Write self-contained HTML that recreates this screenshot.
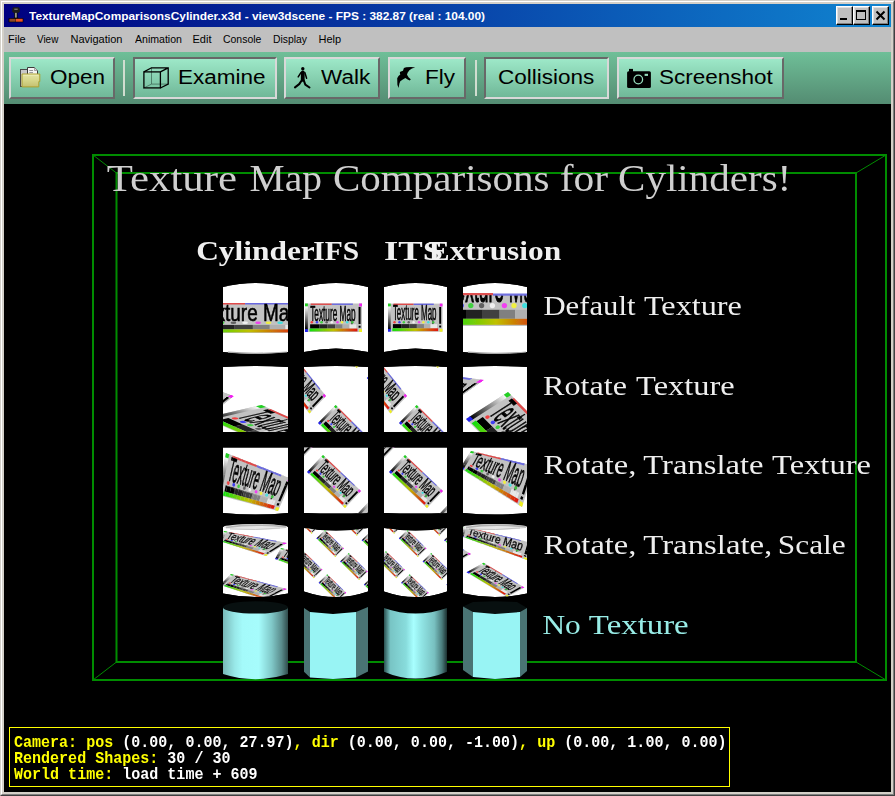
<!DOCTYPE html>
<html><head><meta charset="utf-8">
<style>
*{margin:0;padding:0;box-sizing:border-box}
html,body{width:895px;height:796px;overflow:hidden;background:#d4d0c8;font-family:"Liberation Sans",sans-serif}
#scene{will-change:transform}
.abs{position:absolute}
#frame{position:absolute;left:0;top:0;width:895px;height:796px;background:#d4d0c8;
 border-top:1px solid #d4d0c8;border-left:1px solid #d4d0c8;border-right:1px solid #404040;border-bottom:1px solid #404040}
#frame2{position:absolute;left:1px;top:1px;width:893px;height:794px;border-top:1px solid #fff;border-left:1px solid #fff;border-right:1px solid #808080;border-bottom:1px solid #808080}
#title{position:absolute;left:4px;top:4px;width:887px;height:23px;background:linear-gradient(to right,#000080 0%,#1084d0 100%)}
#ttext{position:absolute;left:29px;top:9px;color:#fff;font-weight:bold;font-size:11px;line-height:14px;white-space:nowrap;transform-origin:0 0;transform:scaleX(1.08)}
.tb{position:absolute;top:6px;width:17px;height:19px;background:#c0c0c0;border-top:1px solid #fff;border-left:1px solid #fff;border-right:1px solid #000;border-bottom:1px solid #000;box-shadow:inset -1px -1px #808080,inset 1px 1px #dfdfdf}
#menu{position:absolute;left:4px;top:27px;width:887px;height:25px;background:#c0c0c0}
.mi{position:absolute;top:32px;font-size:11px;line-height:14px;color:#000;white-space:nowrap}
#toolbar{position:absolute;left:4px;top:52px;width:887px;height:52px;background:linear-gradient(to bottom,#6fbf98,#548c72)}
.btn{position:absolute;top:57px;height:42px;background:linear-gradient(to bottom,#9de8c8,#70b898);
 border-top:2px solid #d8d8d8;border-left:2px solid #d8d8d8;border-right:2px solid #686868;border-bottom:2px solid #686868}
.btn.on{border-top-color:#686868;border-left-color:#686868;border-right-color:#d8d8d8;border-bottom-color:#d8d8d8}
.bt{position:absolute;top:65px;font-size:20px;line-height:24px;color:#000;white-space:nowrap;transform-origin:0 0;transform:scaleX(1.125)}
.sep{position:absolute;top:60px;width:2px;height:36px;background:#d0ddd0}
#view{position:absolute;left:4px;top:104px;width:887px;height:688px;background:#000;overflow:hidden}
</style></head>
<body>
<div id="frame"></div><div id="frame2"></div>
<div id="title"></div>
<div id="ttext">TextureMapComparisonsCylinder.x3d - view3dscene - FPS : 382.87 (real : 104.00)</div>
<div class="tb" style="left:836px"></div>
<div class="tb" style="left:853px"></div>
<div class="tb" style="left:872px"></div>
<div id="menu"></div>
<div class="mi" style="left:8px">File</div>
<div class="mi" style="left:37px;transform:scaleX(0.9);transform-origin:0 0">View</div>
<div class="mi" style="left:70.5px">Navigation</div>
<div class="mi" style="left:134.5px;transform:scaleX(0.96);transform-origin:0 0">Animation</div>
<div class="mi" style="left:192.5px">Edit</div>
<div class="mi" style="left:223px;transform:scaleX(0.95);transform-origin:0 0">Console</div>
<div class="mi" style="left:273px;transform:scaleX(0.94);transform-origin:0 0">Display</div>
<div class="mi" style="left:318.5px">Help</div>
<div id="toolbar"></div>
<div class="btn" style="left:9px;width:106px"></div>
<div class="sep" style="left:123px"></div>
<div class="btn on" style="left:133px;width:144px"></div>
<div class="btn" style="left:284px;width:96px"></div>
<div class="btn" style="left:388px;width:78px"></div>
<div class="sep" style="left:475px"></div>
<div class="btn on" style="left:484px;width:125px"></div>
<div class="btn" style="left:617px;width:167px"></div>
<div class="bt" style="left:50px">Open</div>
<div class="bt" style="left:178px">Examine</div>
<div class="bt" style="left:321px">Walk</div>
<div class="bt" style="left:425px">Fly</div>
<div class="bt" style="left:498px">Collisions</div>
<div class="bt" style="left:659px">Screenshot</div>
<div id="view"></div>

<svg id="scene" width="895" height="796" viewBox="0 0 895 796" style="position:absolute;left:0;top:0">
<defs>
<linearGradient id="gvert" x1="0" y1="0" x2="0" y2="1"><stop offset="0" stop-color="#fff"/><stop offset="1" stop-color="#000"/></linearGradient>
<linearGradient id="ggray" x1="0" y1="0" x2="1" y2="0"><stop offset="0" stop-color="#000"/><stop offset="1" stop-color="#fff"/></linearGradient>
<linearGradient id="grgb" x1="0" y1="0" x2="1" y2="0"><stop offset="0" stop-color="#10e010"/><stop offset="0.5" stop-color="#c0c000"/><stop offset="1" stop-color="#e01010"/></linearGradient>
<filter id="bl" x="-10%" y="-10%" width="120%" height="120%"><feGaussianBlur stdDeviation="0.55"/></filter>
<g id="box">
  <rect width="100" height="50" fill="#c2c2c2"/>
  <rect x="0" y="4" width="5" height="42" fill="url(#gvert)"/>
  <rect x="10" y="0" width="37" height="2.5" fill="#e04848"/>
  <rect x="47" y="0" width="37" height="2.5" fill="#6868e0"/>
  <rect x="0" y="0" width="5" height="5" fill="#20d020"/>
  <rect x="95" y="0" width="5" height="5" fill="#f020f0"/>
  <rect x="0" y="45" width="5" height="5" fill="#2020f0"/>
  <rect x="95" y="45" width="5" height="5" fill="#f0f020"/>
  <text x="9" y="30" font-family="Liberation Sans" font-size="40" textLength="80" lengthAdjust="spacingAndGlyphs" fill="#000" stroke="#000" stroke-width="1">Texture Map</text>
  <circle cx="12" cy="33" r="2.2" fill="#f04040"/><circle cx="21" cy="33" r="2.2" fill="#4040f0"/><circle cx="29" cy="33" r="2.2" fill="#40d040"/>
  <circle cx="38" cy="33" r="2.2" fill="#606060"/><circle cx="47" cy="33" r="2.2" fill="#f0f0f0"/><circle cx="57" cy="33" r="2.2" fill="#f040f0"/>
  <circle cx="65" cy="33" r="2.2" fill="#f0f040"/><circle cx="74" cy="33" r="2.2" fill="#40e0e0"/><circle cx="83" cy="33" r="2.2" fill="#40c040"/>
  <rect x="9" y="36.5" width="16" height="7.5" fill="#000"/><rect x="25" y="36.5" width="14" height="7.5" fill="#202020"/><rect x="39" y="36.5" width="14" height="7.5" fill="#404040"/><rect x="53" y="36.5" width="13" height="7.5" fill="#808080"/><rect x="66" y="36.5" width="12" height="7.5" fill="#b0b0b0"/><rect x="78" y="36.5" width="12" height="7.5" fill="#e8e8e8"/>
  <rect x="8" y="44" width="84" height="5" fill="url(#grgb)"/>
  <rect x="94" y="6" width="3.5" height="30" fill="#000"/><rect x="94" y="39" width="3.5" height="3.5" fill="#000"/>
 </g>
<clipPath id="clipTop294"><rect x="400" y="295" width="200" height="100"/></clipPath>
<clipPath id="s11"><path d="M223.0 287.0Q255.5 279.0 288.0 287.0L288.0 352.0Q255.5 356.0 223.0 352.0Z"/></clipPath>
<clipPath id="s12"><path d="M304.0 287.0Q336.0 279.0 368.0 287.0L368.0 352.0Q336.0 345.0 304.0 352.0Z"/></clipPath>
<clipPath id="s13"><path d="M384.0 287.0Q415.5 279.0 447.0 287.0L447.0 352.0Q415.5 345.0 384.0 352.0Z"/></clipPath>
<clipPath id="s14"><path d="M463.0 287.0Q495.0 279.0 527.0 287.0L527.0 352.0Q495.0 356.0 463.0 352.0Z"/></clipPath>
<clipPath id="s21"><path d="M223.0 367.0Q255.5 365.0 288.0 367.0L288.0 432.0Q255.5 432.0 223.0 432.0Z"/></clipPath>
<clipPath id="s22"><path d="M304.0 367.0Q336.0 365.0 368.0 367.0L368.0 432.0Q336.0 432.0 304.0 432.0Z"/></clipPath>
<clipPath id="s23"><path d="M384.0 367.0Q415.5 365.0 447.0 367.0L447.0 432.0Q415.5 432.0 384.0 432.0Z"/></clipPath>
<clipPath id="s24"><path d="M463.0 367.0Q495.0 365.0 527.0 367.0L527.0 432.0Q495.0 432.0 463.0 432.0Z"/></clipPath>
<clipPath id="s31"><path d="M223.0 447.5Q255.5 447.5 288.0 447.5L288.0 513.0Q255.5 516.0 223.0 513.0Z"/></clipPath>
<clipPath id="s32"><path d="M304.0 447.5Q336.0 447.5 368.0 447.5L368.0 513.0Q336.0 514.0 304.0 513.0Z"/></clipPath>
<clipPath id="s33"><path d="M384.0 447.5Q415.5 447.5 447.0 447.5L447.0 513.0Q415.5 514.0 384.0 513.0Z"/></clipPath>
<clipPath id="s34"><path d="M463.0 447.5Q495.0 447.5 527.0 447.5L527.0 513.0Q495.0 516.0 463.0 513.0Z"/></clipPath>
<clipPath id="s41"><path d="M223.0 527.0Q255.5 521.0 288.0 527.0L288.0 593.5Q255.5 600.5 223.0 593.5Z"/></clipPath>
<clipPath id="s42"><path d="M304.0 528.0Q336.0 533.0 368.0 528.0L368.0 591.5Q336.0 602.5 304.0 591.5Z"/></clipPath>
<clipPath id="s43"><path d="M384.0 528.0Q415.5 533.0 447.0 528.0L447.0 591.5Q415.5 602.5 384.0 591.5Z"/></clipPath>
<clipPath id="s44"><path d="M463.0 527.0Q495.0 521.0 527.0 527.0L527.0 593.5Q495.0 600.5 463.0 593.5Z"/></clipPath>
<clipPath id="q1"><polygon points="221.8,444.5 232.1,448.7 228.6,465.6 218.8,462.0"/></clipPath>
<clipPath id="q2"><polygon points="218.9,461.2 228.8,464.8 226.5,475.9 216.9,472.7"/></clipPath>
<clipPath id="q3"><polygon points="217.0,471.9 226.7,475.1 224.4,486.3 215.0,483.4"/></clipPath>
<clipPath id="q4"><polygon points="215.2,482.6 224.5,485.4 221.1,502.4 212.1,500.1"/></clipPath>
<clipPath id="q5"><polygon points="230.7,448.1 236.2,450.4 232.6,467.1 227.3,465.1"/></clipPath>
<clipPath id="q6"><polygon points="227.5,464.3 232.8,466.3 230.4,477.2 225.2,475.5"/></clipPath>
<clipPath id="q7"><polygon points="225.4,474.7 230.6,476.4 228.2,487.4 223.1,485.9"/></clipPath>
<clipPath id="q8"><polygon points="223.3,485.1 228.4,486.6 224.8,503.3 219.9,502.1"/></clipPath>
<clipPath id="q9"><polygon points="234.9,449.9 240.4,452.1 236.6,468.5 231.3,466.6"/></clipPath>
<clipPath id="q10"><polygon points="231.5,465.8 236.8,467.7 234.4,478.5 229.2,476.8"/></clipPath>
<clipPath id="q11"><polygon points="229.3,476.0 234.5,477.7 232.1,488.6 227.0,487.0"/></clipPath>
<clipPath id="q12"><polygon points="227.2,486.2 232.2,487.8 228.5,504.2 223.6,503.0"/></clipPath>
<clipPath id="q13"><polygon points="239.1,451.6 244.6,453.8 240.7,470.0 235.4,468.1"/></clipPath>
<clipPath id="q14"><polygon points="235.5,467.3 240.9,469.2 238.3,479.9 233.1,478.1"/></clipPath>
<clipPath id="q15"><polygon points="233.3,477.3 238.5,479.1 235.9,489.7 230.8,488.2"/></clipPath>
<clipPath id="q16"><polygon points="231.0,487.4 236.1,488.9 232.2,505.1 227.3,503.9"/></clipPath>
<clipPath id="q17"><polygon points="243.3,453.3 248.8,455.6 244.7,471.5 239.4,469.5"/></clipPath>
<clipPath id="q18"><polygon points="239.6,468.7 244.9,470.7 242.2,481.2 237.0,479.4"/></clipPath>
<clipPath id="q19"><polygon points="237.2,478.6 242.4,480.4 239.7,490.9 234.7,489.3"/></clipPath>
<clipPath id="q20"><polygon points="234.9,488.5 239.9,490.1 235.9,506.0 231.0,504.8"/></clipPath>
<clipPath id="q21"><polygon points="247.4,455.0 253.0,457.3 248.7,472.9 243.4,471.0"/></clipPath>
<clipPath id="q22"><polygon points="243.6,470.2 248.9,472.2 246.2,482.5 241.0,480.7"/></clipPath>
<clipPath id="q23"><polygon points="241.2,480.0 246.4,481.7 243.6,492.0 238.5,490.5"/></clipPath>
<clipPath id="q24"><polygon points="238.7,489.7 243.8,491.2 239.6,506.9 234.7,505.7"/></clipPath>
<clipPath id="q25"><polygon points="251.6,456.7 257.1,459.0 252.8,474.4 247.4,472.5"/></clipPath>
<clipPath id="q26"><polygon points="247.6,471.7 253.0,473.6 250.1,483.8 244.9,482.0"/></clipPath>
<clipPath id="q27"><polygon points="245.1,481.3 250.3,483.0 247.4,493.2 242.3,491.6"/></clipPath>
<clipPath id="q28"><polygon points="242.5,490.9 247.6,492.4 243.2,507.8 238.4,506.6"/></clipPath>
<clipPath id="q29"><polygon points="255.8,458.5 261.3,460.7 256.8,475.9 251.5,473.9"/></clipPath>
<clipPath id="q30"><polygon points="251.7,473.2 257.0,475.1 254.0,485.1 248.8,483.4"/></clipPath>
<clipPath id="q31"><polygon points="249.0,482.6 254.2,484.3 251.3,494.3 246.2,492.8"/></clipPath>
<clipPath id="q32"><polygon points="246.4,492.0 251.5,493.6 246.9,508.7 242.1,507.5"/></clipPath>
<clipPath id="q33"><polygon points="260.0,460.2 265.5,462.4 260.8,477.3 255.5,475.4"/></clipPath>
<clipPath id="q34"><polygon points="255.7,474.6 261.0,476.6 258.0,486.4 252.8,484.7"/></clipPath>
<clipPath id="q35"><polygon points="253.0,483.9 258.2,485.7 255.1,495.5 250.0,493.9"/></clipPath>
<clipPath id="q36"><polygon points="250.2,493.2 255.3,494.7 250.6,509.6 245.8,508.4"/></clipPath>
<clipPath id="q37"><polygon points="264.2,461.9 269.7,464.2 264.8,478.8 259.5,476.8"/></clipPath>
<clipPath id="q38"><polygon points="259.7,476.1 265.1,478.1 261.9,487.7 256.7,486.0"/></clipPath>
<clipPath id="q39"><polygon points="256.9,485.2 262.1,487.0 258.9,496.6 253.9,495.1"/></clipPath>
<clipPath id="q40"><polygon points="254.1,494.4 259.2,495.9 254.3,510.5 249.5,509.3"/></clipPath>
<clipPath id="q41"><polygon points="268.3,463.6 273.9,465.9 268.9,480.2 263.6,478.3"/></clipPath>
<clipPath id="q42"><polygon points="263.8,477.6 269.1,479.5 265.8,489.0 260.6,487.3"/></clipPath>
<clipPath id="q43"><polygon points="260.9,486.6 266.1,488.3 262.8,497.8 257.7,496.2"/></clipPath>
<clipPath id="q44"><polygon points="257.9,495.5 263.0,497.1 258.0,511.4 253.1,510.2"/></clipPath>
<clipPath id="q45"><polygon points="272.5,465.3 278.0,467.6 272.9,481.7 267.6,479.8"/></clipPath>
<clipPath id="q46"><polygon points="267.8,479.1 273.1,481.0 269.8,490.3 264.6,488.6"/></clipPath>
<clipPath id="q47"><polygon points="264.8,487.9 270.0,489.6 266.6,498.9 261.5,497.4"/></clipPath>
<clipPath id="q48"><polygon points="261.8,496.7 266.9,498.2 261.7,512.3 256.8,511.1"/></clipPath>
<clipPath id="q49"><polygon points="276.7,467.1 282.2,469.3 276.9,483.2 271.6,481.2"/></clipPath>
<clipPath id="q50"><polygon points="271.9,480.5 277.2,482.5 273.7,491.6 268.5,489.9"/></clipPath>
<clipPath id="q51"><polygon points="268.7,489.2 273.9,490.9 270.5,500.1 265.4,498.5"/></clipPath>
<clipPath id="q52"><polygon points="265.6,497.8 270.7,499.4 265.4,513.2 260.5,512.0"/></clipPath>
<clipPath id="q53"><polygon points="280.9,468.8 286.4,471.0 280.9,484.6 275.6,482.7"/></clipPath>
<clipPath id="q54"><polygon points="275.9,482.0 281.2,484.0 277.6,492.9 272.4,491.2"/></clipPath>
<clipPath id="q55"><polygon points="272.7,490.5 277.9,492.3 274.3,501.2 269.2,499.7"/></clipPath>
<clipPath id="q56"><polygon points="269.5,499.0 274.6,500.5 269.1,514.1 264.2,512.9"/></clipPath>
<clipPath id="q57"><polygon points="285.1,470.5 290.6,472.8 285.0,486.1 279.7,484.2"/></clipPath>
<clipPath id="q58"><polygon points="279.9,483.5 285.3,485.4 281.6,494.2 276.4,492.5"/></clipPath>
<clipPath id="q59"><polygon points="276.6,491.8 281.8,493.6 278.1,502.4 273.1,500.8"/></clipPath>
<clipPath id="q60"><polygon points="273.3,500.2 278.4,501.7 272.8,515.0 267.9,513.8"/></clipPath>
<clipPath id="q61"><polygon points="289.2,472.2 299.5,476.4 293.5,489.2 283.7,485.6"/></clipPath>
<clipPath id="q62"><polygon points="284.0,485.0 293.8,488.6 289.9,497.0 280.3,493.8"/></clipPath>
<clipPath id="q63"><polygon points="280.6,493.2 290.2,496.4 286.3,504.8 276.9,502.0"/></clipPath>
<clipPath id="q64"><polygon points="277.2,501.3 286.6,504.2 280.6,517.0 271.6,514.7"/></clipPath>
<clipPath id="q65"><polygon points="467.5,447.5 477.3,449.3 472.7,457.0 463.1,453.7"/></clipPath>
<clipPath id="q66"><polygon points="463.3,453.4 473.0,456.6 470.0,461.6 460.4,457.5"/></clipPath>
<clipPath id="q67"><polygon points="460.6,457.2 470.2,461.3 467.2,466.3 457.6,461.3"/></clipPath>
<clipPath id="q68"><polygon points="457.9,461.0 467.4,466.0 462.8,473.6 453.4,467.1"/></clipPath>
<clipPath id="q69"><polygon points="476.0,449.0 481.3,450.0 476.7,458.3 471.5,456.5"/></clipPath>
<clipPath id="q70"><polygon points="471.7,456.2 476.9,457.9 473.9,463.3 468.7,461.1"/></clipPath>
<clipPath id="q71"><polygon points="468.9,460.7 474.1,462.9 471.1,468.4 465.9,465.7"/></clipPath>
<clipPath id="q72"><polygon points="466.1,465.3 471.3,468.0 466.7,476.3 461.6,472.8"/></clipPath>
<clipPath id="q73"><polygon points="480.0,449.8 485.3,450.7 480.7,459.6 475.4,457.9"/></clipPath>
<clipPath id="q74"><polygon points="475.7,457.5 480.9,459.2 477.8,465.0 472.6,462.8"/></clipPath>
<clipPath id="q75"><polygon points="472.9,462.4 478.1,464.6 475.0,470.5 469.8,467.7"/></clipPath>
<clipPath id="q76"><polygon points="470.0,467.3 475.2,470.1 470.5,479.0 465.4,475.4"/></clipPath>
<clipPath id="q77"><polygon points="484.1,450.5 489.4,451.4 484.6,460.9 479.4,459.2"/></clipPath>
<clipPath id="q78"><polygon points="479.6,458.8 484.9,460.5 481.8,466.8 476.6,464.5"/></clipPath>
<clipPath id="q79"><polygon points="476.8,464.1 482.0,466.3 478.9,472.6 473.7,469.8"/></clipPath>
<clipPath id="q80"><polygon points="474.0,469.4 479.1,472.1 474.4,481.6 469.3,478.1"/></clipPath>
<clipPath id="q81"><polygon points="488.1,451.2 493.4,452.1 488.6,462.3 483.4,460.5"/></clipPath>
<clipPath id="q82"><polygon points="483.6,460.1 488.8,461.8 485.7,468.5 480.5,466.2"/></clipPath>
<clipPath id="q83"><polygon points="480.7,465.8 485.9,468.0 482.8,474.6 477.6,471.9"/></clipPath>
<clipPath id="q84"><polygon points="477.9,471.4 483.0,474.1 478.2,484.3 473.2,480.8"/></clipPath>
<clipPath id="q85"><polygon points="492.1,451.9 497.4,452.8 492.6,463.6 487.3,461.8"/></clipPath>
<clipPath id="q86"><polygon points="487.6,461.4 492.8,463.1 489.6,470.2 484.4,467.9"/></clipPath>
<clipPath id="q87"><polygon points="484.7,467.4 489.9,469.6 486.7,476.7 481.5,474.0"/></clipPath>
<clipPath id="q88"><polygon points="481.8,473.5 486.9,476.2 482.1,487.0 477.0,483.4"/></clipPath>
<clipPath id="q89"><polygon points="496.1,452.6 501.4,453.6 496.5,464.9 491.3,463.2"/></clipPath>
<clipPath id="q90"><polygon points="491.5,462.7 496.8,464.4 493.6,471.9 488.4,469.6"/></clipPath>
<clipPath id="q91"><polygon points="488.6,469.1 493.8,471.3 490.6,478.8 485.4,476.1"/></clipPath>
<clipPath id="q92"><polygon points="485.7,475.5 490.8,478.2 486.0,489.6 480.9,486.1"/></clipPath>
<clipPath id="q93"><polygon points="500.1,453.3 505.4,454.3 500.5,466.3 495.3,464.5"/></clipPath>
<clipPath id="q94"><polygon points="495.5,464.0 500.8,465.7 497.5,473.6 492.3,471.3"/></clipPath>
<clipPath id="q95"><polygon points="492.6,470.8 497.8,473.0 494.5,480.9 489.4,478.1"/></clipPath>
<clipPath id="q96"><polygon points="489.6,477.6 494.7,480.3 489.8,492.3 484.7,488.8"/></clipPath>
<clipPath id="q97"><polygon points="504.2,454.0 509.5,455.0 504.5,467.6 499.2,465.8"/></clipPath>
<clipPath id="q98"><polygon points="499.5,465.3 504.7,467.0 501.4,475.3 496.3,473.0"/></clipPath>
<clipPath id="q99"><polygon points="496.5,472.4 501.7,474.7 498.4,482.9 493.3,480.2"/></clipPath>
<clipPath id="q100"><polygon points="493.5,479.6 498.7,482.3 493.7,494.9 488.6,491.4"/></clipPath>
<clipPath id="q101"><polygon points="508.2,454.7 513.5,455.7 508.4,468.9 503.2,467.2"/></clipPath>
<clipPath id="q102"><polygon points="503.5,466.5 508.7,468.3 505.4,477.0 500.2,474.7"/></clipPath>
<clipPath id="q103"><polygon points="500.4,474.1 505.6,476.3 502.3,485.0 497.2,482.3"/></clipPath>
<clipPath id="q104"><polygon points="497.4,481.7 502.6,484.4 497.5,497.6 492.4,494.1"/></clipPath>
<clipPath id="q105"><polygon points="512.2,455.5 517.5,456.4 512.4,470.2 507.2,468.5"/></clipPath>
<clipPath id="q106"><polygon points="507.4,467.8 512.7,469.6 509.3,478.7 504.1,476.4"/></clipPath>
<clipPath id="q107"><polygon points="504.4,475.8 509.6,478.0 506.2,487.1 501.1,484.4"/></clipPath>
<clipPath id="q108"><polygon points="501.3,483.7 506.5,486.4 501.4,500.3 496.3,496.7"/></clipPath>
<clipPath id="q109"><polygon points="516.2,456.2 521.5,457.1 516.4,471.6 511.1,469.8"/></clipPath>
<clipPath id="q110"><polygon points="511.4,469.1 516.6,470.9 513.3,480.4 508.1,478.1"/></clipPath>
<clipPath id="q111"><polygon points="508.3,477.5 513.5,479.7 510.1,489.2 505.0,486.4"/></clipPath>
<clipPath id="q112"><polygon points="505.2,485.8 510.4,488.5 505.2,502.9 500.2,499.4"/></clipPath>
<clipPath id="q113"><polygon points="520.2,456.9 525.5,457.8 520.4,472.9 515.1,471.1"/></clipPath>
<clipPath id="q114"><polygon points="515.4,470.4 520.6,472.2 517.2,482.1 512.0,479.8"/></clipPath>
<clipPath id="q115"><polygon points="512.2,479.1 517.4,481.3 514.0,491.3 508.9,488.5"/></clipPath>
<clipPath id="q116"><polygon points="509.1,487.8 514.3,490.5 509.1,505.6 504.0,502.1"/></clipPath>
<clipPath id="q117"><polygon points="524.3,457.6 529.6,458.5 524.3,474.2 519.1,472.5"/></clipPath>
<clipPath id="q118"><polygon points="519.3,471.7 524.6,473.5 521.1,483.8 515.9,481.5"/></clipPath>
<clipPath id="q119"><polygon points="516.2,480.8 521.4,483.0 517.9,493.3 512.8,490.6"/></clipPath>
<clipPath id="q120"><polygon points="513.0,489.9 518.2,492.6 513.0,508.3 507.9,504.7"/></clipPath>
<clipPath id="q121"><polygon points="528.3,458.3 533.6,459.3 528.3,475.5 523.1,473.8"/></clipPath>
<clipPath id="q122"><polygon points="523.3,473.0 528.5,474.8 525.1,485.5 519.9,483.2"/></clipPath>
<clipPath id="q123"><polygon points="520.1,482.5 525.3,484.7 521.8,495.4 516.7,492.7"/></clipPath>
<clipPath id="q124"><polygon points="516.9,491.9 522.1,494.6 516.8,510.9 511.7,507.4"/></clipPath>
<clipPath id="q125"><polygon points="532.3,459.0 542.1,460.8 536.7,478.4 527.0,475.1"/></clipPath>
<clipPath id="q126"><polygon points="527.3,474.3 537.0,477.5 533.4,489.1 523.8,484.9"/></clipPath>
<clipPath id="q127"><polygon points="524.1,484.1 533.7,488.2 530.1,499.8 520.6,494.8"/></clipPath>
<clipPath id="q128"><polygon points="520.8,494.0 530.4,499.0 525.0,516.6 515.6,510.1"/></clipPath>
<clipPath id="q129"><polygon points="219.5,528.6 229.5,530.3 227.0,534.5 218.0,532.6"/></clipPath>
<clipPath id="q130"><polygon points="218.1,532.4 227.1,534.3 225.4,537.1 217.1,535.0"/></clipPath>
<clipPath id="q131"><polygon points="217.1,534.8 225.5,536.9 223.9,539.6 216.1,537.5"/></clipPath>
<clipPath id="q132"><polygon points="216.2,537.3 224.0,539.4 221.5,543.6 214.7,541.3"/></clipPath>
<clipPath id="q133"><polygon points="228.2,530.1 233.6,531.1 230.6,535.3 225.8,534.3"/></clipPath>
<clipPath id="q134"><polygon points="225.9,534.1 230.8,535.1 228.9,537.9 224.3,536.8"/></clipPath>
<clipPath id="q135"><polygon points="224.4,536.6 229.0,537.7 227.1,540.5 222.9,539.3"/></clipPath>
<clipPath id="q136"><polygon points="223.0,539.1 227.2,540.3 224.3,544.6 220.6,543.3"/></clipPath>
<clipPath id="q137"><polygon points="232.3,530.8 237.7,531.8 234.3,536.1 229.5,535.1"/></clipPath>
<clipPath id="q138"><polygon points="229.6,534.9 234.5,535.9 232.3,538.8 227.8,537.7"/></clipPath>
<clipPath id="q139"><polygon points="227.9,537.4 232.4,538.6 230.2,541.4 226.0,540.2"/></clipPath>
<clipPath id="q140"><polygon points="226.2,540.0 230.4,541.2 227.1,545.6 223.4,544.3"/></clipPath>
<clipPath id="q141"><polygon points="236.4,531.6 241.8,532.5 238.0,536.9 233.1,535.9"/></clipPath>
<clipPath id="q142"><polygon points="233.3,535.7 238.2,536.7 235.7,539.6 231.2,538.5"/></clipPath>
<clipPath id="q143"><polygon points="231.3,538.3 235.9,539.4 233.4,542.3 229.2,541.1"/></clipPath>
<clipPath id="q144"><polygon points="229.4,540.9 233.6,542.1 229.8,546.5 226.2,545.2"/></clipPath>
<clipPath id="q145"><polygon points="240.4,532.3 245.8,533.2 241.7,537.7 236.8,536.7"/></clipPath>
<clipPath id="q146"><polygon points="237.0,536.5 241.9,537.5 239.1,540.5 234.6,539.3"/></clipPath>
<clipPath id="q147"><polygon points="234.8,539.1 239.3,540.2 236.6,543.2 232.4,542.0"/></clipPath>
<clipPath id="q148"><polygon points="232.6,541.8 236.8,543.0 232.6,547.5 229.0,546.2"/></clipPath>
<clipPath id="q149"><polygon points="244.5,533.0 249.9,533.9 245.4,538.5 240.5,537.5"/></clipPath>
<clipPath id="q150"><polygon points="240.7,537.2 245.6,538.3 242.6,541.3 238.0,540.2"/></clipPath>
<clipPath id="q151"><polygon points="238.2,540.0 242.8,541.1 239.8,544.1 235.6,542.9"/></clipPath>
<clipPath id="q152"><polygon points="235.8,542.7 240.0,543.9 235.4,548.4 231.7,547.2"/></clipPath>
<clipPath id="q153"><polygon points="248.6,533.7 254.0,534.7 249.0,539.3 244.2,538.3"/></clipPath>
<clipPath id="q154"><polygon points="244.4,538.0 249.3,539.1 246.0,542.2 241.5,541.0"/></clipPath>
<clipPath id="q155"><polygon points="241.7,540.8 246.2,541.9 243.0,545.0 238.8,543.8"/></clipPath>
<clipPath id="q156"><polygon points="239.0,543.6 243.2,544.8 238.2,549.4 234.5,548.1"/></clipPath>
<clipPath id="q157"><polygon points="252.7,534.4 258.1,535.4 252.7,540.1 247.9,539.1"/></clipPath>
<clipPath id="q158"><polygon points="248.1,538.8 253.0,539.9 249.4,543.0 244.9,541.9"/></clipPath>
<clipPath id="q159"><polygon points="245.1,541.7 249.7,542.8 246.1,545.9 241.9,544.7"/></clipPath>
<clipPath id="q160"><polygon points="242.2,544.5 246.4,545.7 241.0,550.4 237.3,549.1"/></clipPath>
<clipPath id="q161"><polygon points="256.8,535.2 262.2,536.1 256.4,540.9 251.5,539.9"/></clipPath>
<clipPath id="q162"><polygon points="251.8,539.6 256.7,540.7 252.8,543.8 248.3,542.7"/></clipPath>
<clipPath id="q163"><polygon points="248.6,542.5 253.1,543.6 249.3,546.8 245.1,545.6"/></clipPath>
<clipPath id="q164"><polygon points="245.4,545.4 249.6,546.5 243.8,551.3 240.1,550.1"/></clipPath>
<clipPath id="q165"><polygon points="260.9,535.9 266.3,536.8 260.1,541.7 255.2,540.7"/></clipPath>
<clipPath id="q166"><polygon points="255.5,540.4 260.4,541.5 256.3,544.7 251.7,543.6"/></clipPath>
<clipPath id="q167"><polygon points="252.0,543.3 256.6,544.5 252.5,547.7 248.3,546.5"/></clipPath>
<clipPath id="q168"><polygon points="248.6,546.3 252.8,547.4 246.6,552.3 242.9,551.0"/></clipPath>
<clipPath id="q169"><polygon points="265.0,536.6 270.4,537.6 263.7,542.5 258.9,541.5"/></clipPath>
<clipPath id="q170"><polygon points="259.2,541.2 264.1,542.3 259.7,545.5 255.2,544.4"/></clipPath>
<clipPath id="q171"><polygon points="255.5,544.2 260.0,545.3 255.7,548.6 251.5,547.4"/></clipPath>
<clipPath id="q172"><polygon points="251.8,547.1 256.0,548.3 249.4,553.3 245.7,552.0"/></clipPath>
<clipPath id="q173"><polygon points="269.1,537.3 274.5,538.3 267.4,543.3 262.6,542.3"/></clipPath>
<clipPath id="q174"><polygon points="262.9,542.0 267.8,543.1 263.1,546.4 258.6,545.3"/></clipPath>
<clipPath id="q175"><polygon points="258.9,545.0 263.5,546.1 258.8,549.5 254.6,548.3"/></clipPath>
<clipPath id="q176"><polygon points="255.0,548.0 259.2,549.2 252.1,554.2 248.5,553.0"/></clipPath>
<clipPath id="q177"><polygon points="273.1,538.0 278.5,539.0 271.1,544.1 266.2,543.1"/></clipPath>
<clipPath id="q178"><polygon points="266.6,542.8 271.5,543.9 266.6,547.2 262.0,546.1"/></clipPath>
<clipPath id="q179"><polygon points="262.4,545.9 266.9,547.0 262.0,550.3 257.8,549.2"/></clipPath>
<clipPath id="q180"><polygon points="258.2,548.9 262.4,550.1 254.9,555.2 251.3,553.9"/></clipPath>
<clipPath id="q181"><polygon points="277.2,538.8 282.6,539.7 274.8,544.9 269.9,543.9"/></clipPath>
<clipPath id="q182"><polygon points="270.3,543.6 275.2,544.7 270.0,548.1 265.5,547.0"/></clipPath>
<clipPath id="q183"><polygon points="265.8,546.7 270.4,547.8 265.2,551.2 261.0,550.1"/></clipPath>
<clipPath id="q184"><polygon points="261.4,549.8 265.6,551.0 257.7,556.2 254.0,554.9"/></clipPath>
<clipPath id="q185"><polygon points="281.3,539.5 286.7,540.4 278.5,545.7 273.6,544.7"/></clipPath>
<clipPath id="q186"><polygon points="274.0,544.4 278.9,545.5 273.4,548.9 268.9,547.8"/></clipPath>
<clipPath id="q187"><polygon points="269.3,547.6 273.8,548.7 268.4,552.1 264.2,551.0"/></clipPath>
<clipPath id="q188"><polygon points="264.6,550.7 268.8,551.9 260.5,557.1 256.8,555.9"/></clipPath>
<clipPath id="q189"><polygon points="285.4,540.2 295.4,542.0 286.2,547.4 277.3,545.5"/></clipPath>
<clipPath id="q190"><polygon points="277.7,545.2 286.7,547.1 280.7,550.7 272.3,548.6"/></clipPath>
<clipPath id="q191"><polygon points="272.7,548.4 281.1,550.4 275.1,554.0 267.4,551.8"/></clipPath>
<clipPath id="q192"><polygon points="267.8,551.6 275.6,553.8 266.4,559.2 259.6,556.8"/></clipPath>
<clipPath id="q193"><polygon points="228.1,571.2 236.8,573.4 232.0,577.9 223.9,575.7"/></clipPath>
<clipPath id="q194"><polygon points="224.1,575.4 232.2,577.7 229.1,580.7 221.3,578.4"/></clipPath>
<clipPath id="q195"><polygon points="221.5,578.2 229.3,580.5 226.1,583.4 218.8,581.2"/></clipPath>
<clipPath id="q196"><polygon points="219.0,580.9 226.4,583.2 221.6,587.7 214.8,585.5"/></clipPath>
<clipPath id="q197"><polygon points="235.7,573.1 240.4,574.4 235.3,578.9 230.9,577.6"/></clipPath>
<clipPath id="q198"><polygon points="231.2,577.4 235.6,578.7 232.3,581.6 228.1,580.4"/></clipPath>
<clipPath id="q199"><polygon points="228.3,580.2 232.5,581.4 229.2,584.4 225.2,583.1"/></clipPath>
<clipPath id="q200"><polygon points="225.4,582.9 229.4,584.2 224.4,588.7 220.7,587.4"/></clipPath>
<clipPath id="q201"><polygon points="239.3,574.1 244.0,575.3 238.7,579.8 234.3,578.6"/></clipPath>
<clipPath id="q202"><polygon points="234.5,578.4 238.9,579.6 235.4,582.6 231.2,581.3"/></clipPath>
<clipPath id="q203"><polygon points="231.5,581.1 235.7,582.4 232.2,585.3 228.2,584.1"/></clipPath>
<clipPath id="q204"><polygon points="228.4,583.9 232.5,585.1 227.1,589.6 223.5,588.4"/></clipPath>
<clipPath id="q205"><polygon points="242.9,575.0 247.6,576.2 242.0,580.8 237.6,579.5"/></clipPath>
<clipPath id="q206"><polygon points="237.9,579.3 242.3,580.5 238.6,583.5 234.4,582.3"/></clipPath>
<clipPath id="q207"><polygon points="234.7,582.1 238.9,583.3 235.2,586.3 231.2,585.0"/></clipPath>
<clipPath id="q208"><polygon points="231.5,584.8 235.5,586.0 229.9,590.6 226.2,589.3"/></clipPath>
<clipPath id="q209"><polygon points="246.4,575.9 251.2,577.2 245.4,581.7 241.0,580.5"/></clipPath>
<clipPath id="q210"><polygon points="241.2,580.2 245.6,581.5 241.8,584.4 237.6,583.2"/></clipPath>
<clipPath id="q211"><polygon points="237.9,583.0 242.1,584.2 238.2,587.2 234.3,586.0"/></clipPath>
<clipPath id="q212"><polygon points="234.5,585.7 238.5,587.0 232.7,591.5 229.0,590.2"/></clipPath>
<clipPath id="q213"><polygon points="250.0,576.9 254.8,578.1 248.7,582.6 244.3,581.4"/></clipPath>
<clipPath id="q214"><polygon points="244.6,581.2 249.0,582.4 245.0,585.4 240.8,584.1"/></clipPath>
<clipPath id="q215"><polygon points="241.1,583.9 245.3,585.2 241.3,588.1 237.3,586.9"/></clipPath>
<clipPath id="q216"><polygon points="237.6,586.7 241.6,587.9 235.5,592.4 231.8,591.2"/></clipPath>
<clipPath id="q217"><polygon points="253.6,577.8 258.4,579.1 252.0,583.6 247.6,582.3"/></clipPath>
<clipPath id="q218"><polygon points="247.9,582.1 252.3,583.4 248.2,586.3 244.0,585.1"/></clipPath>
<clipPath id="q219"><polygon points="244.3,584.9 248.5,586.1 244.3,589.1 240.3,587.8"/></clipPath>
<clipPath id="q220"><polygon points="240.6,587.6 244.6,588.9 238.3,593.4 234.6,592.1"/></clipPath>
<clipPath id="q221"><polygon points="257.2,578.8 262.0,580.0 255.4,584.5 251.0,583.3"/></clipPath>
<clipPath id="q222"><polygon points="251.3,583.1 255.7,584.3 251.3,587.3 247.1,586.0"/></clipPath>
<clipPath id="q223"><polygon points="247.5,585.8 251.7,587.0 247.3,590.0 243.3,588.8"/></clipPath>
<clipPath id="q224"><polygon points="243.6,588.6 247.6,589.8 241.0,594.3 237.4,593.1"/></clipPath>
<clipPath id="q225"><polygon points="260.8,579.7 265.6,580.9 258.7,585.4 254.3,584.2"/></clipPath>
<clipPath id="q226"><polygon points="254.6,584.0 259.0,585.2 254.5,588.2 250.3,587.0"/></clipPath>
<clipPath id="q227"><polygon points="250.6,586.7 254.9,588.0 250.3,590.9 246.4,589.7"/></clipPath>
<clipPath id="q228"><polygon points="246.7,589.5 250.7,590.7 243.8,595.2 240.2,594.0"/></clipPath>
<clipPath id="q229"><polygon points="264.4,580.6 269.2,581.9 262.0,586.4 257.6,585.1"/></clipPath>
<clipPath id="q230"><polygon points="258.0,584.9 262.4,586.2 257.7,589.1 253.5,587.9"/></clipPath>
<clipPath id="q231"><polygon points="253.8,587.7 258.1,588.9 253.4,591.9 249.4,590.6"/></clipPath>
<clipPath id="q232"><polygon points="249.7,590.4 253.7,591.7 246.6,596.2 242.9,594.9"/></clipPath>
<clipPath id="q233"><polygon points="268.0,581.6 272.8,582.8 265.4,587.3 261.0,586.1"/></clipPath>
<clipPath id="q234"><polygon points="261.3,585.9 265.7,587.1 260.9,590.1 256.7,588.8"/></clipPath>
<clipPath id="q235"><polygon points="257.0,588.6 261.3,589.9 256.4,592.8 252.4,591.6"/></clipPath>
<clipPath id="q236"><polygon points="252.7,591.4 256.8,592.6 249.4,597.1 245.7,595.9"/></clipPath>
<clipPath id="q237"><polygon points="271.6,582.5 276.3,583.8 268.7,588.3 264.3,587.0"/></clipPath>
<clipPath id="q238"><polygon points="264.7,586.8 269.1,588.0 264.1,591.0 259.9,589.8"/></clipPath>
<clipPath id="q239"><polygon points="260.2,589.6 264.4,590.8 259.4,593.8 255.4,592.5"/></clipPath>
<clipPath id="q240"><polygon points="255.8,592.3 259.8,593.5 252.2,598.0 248.5,596.8"/></clipPath>
<clipPath id="q241"><polygon points="275.2,583.4 279.9,584.7 272.1,589.2 267.7,588.0"/></clipPath>
<clipPath id="q242"><polygon points="268.0,587.7 272.4,589.0 267.3,591.9 263.1,590.7"/></clipPath>
<clipPath id="q243"><polygon points="263.4,590.5 267.6,591.7 262.4,594.7 258.5,593.5"/></clipPath>
<clipPath id="q244"><polygon points="258.8,593.2 262.8,594.5 255.0,599.0 251.3,597.8"/></clipPath>
<clipPath id="q245"><polygon points="278.8,584.4 283.5,585.6 275.4,590.1 271.0,588.9"/></clipPath>
<clipPath id="q246"><polygon points="271.4,588.7 275.8,589.9 270.4,592.9 266.2,591.6"/></clipPath>
<clipPath id="q247"><polygon points="266.6,591.4 270.8,592.7 265.5,595.6 261.5,594.4"/></clipPath>
<clipPath id="q248"><polygon points="261.9,594.2 265.9,595.4 257.7,599.9 254.1,598.7"/></clipPath>
<clipPath id="q249"><polygon points="282.4,585.3 287.1,586.6 278.7,591.1 274.3,589.8"/></clipPath>
<clipPath id="q250"><polygon points="274.7,589.6 279.1,590.9 273.6,593.8 269.4,592.6"/></clipPath>
<clipPath id="q251"><polygon points="269.8,592.4 274.0,593.6 268.5,596.6 264.5,595.3"/></clipPath>
<clipPath id="q252"><polygon points="264.9,595.1 268.9,596.4 260.5,600.9 256.8,599.6"/></clipPath>
<clipPath id="q253"><polygon points="286.0,586.3 294.8,588.5 285.8,593.1 277.7,590.8"/></clipPath>
<clipPath id="q254"><polygon points="278.1,590.6 286.2,592.8 280.4,595.8 272.6,593.5"/></clipPath>
<clipPath id="q255"><polygon points="273.0,593.3 280.8,595.6 274.9,598.6 267.5,596.3"/></clipPath>
<clipPath id="q256"><polygon points="267.9,596.1 275.3,598.3 266.4,602.9 259.6,600.6"/></clipPath>
<clipPath id="q257"><polygon points="277.0,545.3 286.3,547.3 283.5,551.9 275.0,549.7"/></clipPath>
<clipPath id="q258"><polygon points="275.1,549.5 283.6,551.7 281.7,554.7 273.8,552.4"/></clipPath>
<clipPath id="q259"><polygon points="273.9,552.2 281.8,554.5 279.9,557.5 272.6,555.1"/></clipPath>
<clipPath id="q260"><polygon points="272.7,554.8 280.1,557.3 277.2,561.9 270.7,559.3"/></clipPath>
<clipPath id="q261"><polygon points="285.1,547.1 290.1,548.2 286.9,552.9 282.3,551.6"/></clipPath>
<clipPath id="q262"><polygon points="282.5,551.4 287.1,552.6 284.9,555.7 280.7,554.4"/></clipPath>
<clipPath id="q263"><polygon points="280.8,554.2 285.1,555.5 283.0,558.6 279.0,557.2"/></clipPath>
<clipPath id="q264"><polygon points="279.1,557.0 283.1,558.3 279.9,563.0 276.4,561.6"/></clipPath>
<clipPath id="q265"><polygon points="288.9,547.9 294.0,549.0 290.4,553.8 285.8,552.6"/></clipPath>
<clipPath id="q266"><polygon points="286.0,552.3 290.5,553.5 288.2,556.7 283.9,555.4"/></clipPath>
<clipPath id="q267"><polygon points="284.1,555.2 288.4,556.4 286.0,559.6 282.0,558.2"/></clipPath>
<clipPath id="q268"><polygon points="282.2,558.0 286.2,559.3 282.6,564.1 279.0,562.7"/></clipPath>
<clipPath id="q269"><polygon points="292.7,548.8 297.8,549.9 293.8,554.7 289.3,553.5"/></clipPath>
<clipPath id="q270"><polygon points="289.4,553.3 294.0,554.5 291.4,557.6 287.1,556.4"/></clipPath>
<clipPath id="q271"><polygon points="287.3,556.1 291.6,557.4 289.0,560.6 285.0,559.2"/></clipPath>
<clipPath id="q272"><polygon points="285.2,559.0 289.2,560.4 285.3,565.2 281.7,563.7"/></clipPath>
<clipPath id="q273"><polygon points="296.6,549.6 301.6,550.7 297.3,555.6 292.7,554.4"/></clipPath>
<clipPath id="q274"><polygon points="292.9,554.2 297.5,555.4 294.7,558.6 290.4,557.3"/></clipPath>
<clipPath id="q275"><polygon points="290.6,557.1 294.9,558.4 292.0,561.6 288.0,560.3"/></clipPath>
<clipPath id="q276"><polygon points="288.2,560.0 292.2,561.4 287.9,566.3 284.4,564.8"/></clipPath>
<clipPath id="q277"><polygon points="300.4,550.4 305.4,551.6 300.8,556.6 296.2,555.3"/></clipPath>
<clipPath id="q278"><polygon points="296.4,555.1 301.0,556.3 297.9,559.6 293.6,558.3"/></clipPath>
<clipPath id="q279"><polygon points="293.8,558.1 298.1,559.3 295.1,562.6 291.1,561.3"/></clipPath>
<clipPath id="q280"><polygon points="291.3,561.0 295.3,562.4 290.6,567.4 287.1,565.9"/></clipPath>
<clipPath id="q281"><polygon points="304.2,551.3 309.2,552.4 304.2,557.5 299.6,556.3"/></clipPath>
<clipPath id="q282"><polygon points="299.9,556.0 304.5,557.2 301.1,560.6 296.9,559.3"/></clipPath>
<clipPath id="q283"><polygon points="297.1,559.0 301.4,560.3 298.1,563.6 294.1,562.3"/></clipPath>
<clipPath id="q284"><polygon points="294.3,562.1 298.3,563.4 293.3,568.5 289.8,567.0"/></clipPath>
<clipPath id="q285"><polygon points="308.0,552.1 313.1,553.3 307.7,558.4 303.1,557.2"/></clipPath>
<clipPath id="q286"><polygon points="303.3,556.9 307.9,558.1 304.4,561.5 300.1,560.2"/></clipPath>
<clipPath id="q287"><polygon points="300.3,560.0 304.7,561.3 301.1,564.7 297.1,563.3"/></clipPath>
<clipPath id="q288"><polygon points="297.4,563.1 301.4,564.4 296.0,569.5 292.4,568.1"/></clipPath>
<clipPath id="q289"><polygon points="311.8,553.0 316.9,554.1 311.1,559.3 306.6,558.1"/></clipPath>
<clipPath id="q290"><polygon points="306.8,557.9 311.4,559.1 307.6,562.5 303.4,561.2"/></clipPath>
<clipPath id="q291"><polygon points="303.6,561.0 307.9,562.2 304.1,565.7 300.1,564.3"/></clipPath>
<clipPath id="q292"><polygon points="300.4,564.1 304.4,565.4 298.7,570.6 295.1,569.2"/></clipPath>
<clipPath id="q293"><polygon points="315.7,553.8 320.7,555.0 314.6,560.2 310.0,559.0"/></clipPath>
<clipPath id="q294"><polygon points="310.3,558.8 314.9,560.0 310.9,563.5 306.6,562.2"/></clipPath>
<clipPath id="q295"><polygon points="306.9,561.9 311.2,563.2 307.1,566.7 303.2,565.4"/></clipPath>
<clipPath id="q296"><polygon points="303.4,565.1 307.4,566.4 301.3,571.7 297.8,570.3"/></clipPath>
<clipPath id="q297"><polygon points="319.5,554.7 324.5,555.8 318.1,561.2 313.5,559.9"/></clipPath>
<clipPath id="q298"><polygon points="313.8,559.7 318.4,560.9 314.1,564.4 309.8,563.2"/></clipPath>
<clipPath id="q299"><polygon points="310.1,562.9 314.4,564.2 310.2,567.7 306.2,566.4"/></clipPath>
<clipPath id="q300"><polygon points="306.5,566.1 310.5,567.5 304.0,572.8 300.5,571.4"/></clipPath>
<clipPath id="q301"><polygon points="323.3,555.5 328.3,556.6 321.5,562.1 316.9,560.9"/></clipPath>
<clipPath id="q302"><polygon points="317.3,560.6 321.8,561.8 317.4,565.4 313.1,564.1"/></clipPath>
<clipPath id="q303"><polygon points="313.4,563.9 317.7,565.1 313.2,568.7 309.2,567.4"/></clipPath>
<clipPath id="q304"><polygon points="309.5,567.1 313.5,568.5 306.7,573.9 303.2,572.5"/></clipPath>
<clipPath id="q305"><polygon points="327.1,556.4 332.2,557.5 325.0,563.0 320.4,561.8"/></clipPath>
<clipPath id="q306"><polygon points="320.7,561.5 325.3,562.7 320.6,566.4 316.3,565.1"/></clipPath>
<clipPath id="q307"><polygon points="316.6,564.8 320.9,566.1 316.2,569.8 312.2,568.4"/></clipPath>
<clipPath id="q308"><polygon points="312.6,568.1 316.6,569.5 309.4,575.0 305.8,573.6"/></clipPath>
<clipPath id="q309"><polygon points="330.9,557.2 336.0,558.3 328.4,563.9 323.9,562.7"/></clipPath>
<clipPath id="q310"><polygon points="324.2,562.5 328.8,563.7 323.8,567.4 319.6,566.1"/></clipPath>
<clipPath id="q311"><polygon points="319.9,565.8 324.2,567.1 319.2,570.8 315.2,569.4"/></clipPath>
<clipPath id="q312"><polygon points="315.6,569.2 319.6,570.5 312.1,576.1 308.5,574.7"/></clipPath>
<clipPath id="q313"><polygon points="334.8,558.1 339.8,559.2 331.9,564.9 327.3,563.6"/></clipPath>
<clipPath id="q314"><polygon points="327.7,563.4 332.3,564.6 327.1,568.3 322.8,567.0"/></clipPath>
<clipPath id="q315"><polygon points="323.2,566.8 327.5,568.0 322.3,571.8 318.3,570.4"/></clipPath>
<clipPath id="q316"><polygon points="318.6,570.2 322.6,571.5 314.7,577.2 311.2,575.7"/></clipPath>
<clipPath id="q317"><polygon points="338.6,558.9 347.9,561.0 339.2,566.8 330.8,564.6"/></clipPath>
<clipPath id="q318"><polygon points="331.2,564.3 339.7,566.5 333.9,570.4 326.0,568.0"/></clipPath>
<clipPath id="q319"><polygon points="326.4,567.7 334.4,570.1 328.7,573.9 321.3,571.5"/></clipPath>
<clipPath id="q320"><polygon points="321.7,571.2 329.1,573.7 320.4,579.5 313.9,576.8"/></clipPath>
<clipPath id="q321"><polygon points="457.9,523.2 468.5,525.7 467.2,530.0 456.7,527.1"/></clipPath>
<clipPath id="q322"><polygon points="456.8,526.9 467.2,529.8 466.4,532.6 456.0,529.5"/></clipPath>
<clipPath id="q323"><polygon points="456.1,529.3 466.5,532.4 465.6,535.2 455.3,531.8"/></clipPath>
<clipPath id="q324"><polygon points="455.4,531.6 465.7,535.0 464.4,539.3 454.2,535.5"/></clipPath>
<clipPath id="q325"><polygon points="467.1,525.3 472.8,526.7 471.5,531.1 465.8,529.6"/></clipPath>
<clipPath id="q326"><polygon points="465.9,529.4 471.5,530.9 470.6,533.9 465.0,532.2"/></clipPath>
<clipPath id="q327"><polygon points="465.1,532.0 470.7,533.7 469.8,536.6 464.3,534.8"/></clipPath>
<clipPath id="q328"><polygon points="464.3,534.6 469.9,536.4 468.6,540.9 463.1,538.8"/></clipPath>
<clipPath id="q329"><polygon points="471.4,526.3 477.1,527.7 475.7,532.3 470.1,530.8"/></clipPath>
<clipPath id="q330"><polygon points="470.2,530.5 475.8,532.1 474.9,535.2 469.3,533.5"/></clipPath>
<clipPath id="q331"><polygon points="469.4,533.2 475.0,534.9 474.0,538.0 468.5,536.2"/></clipPath>
<clipPath id="q332"><polygon points="468.5,536.0 474.1,537.8 472.7,542.4 467.2,540.4"/></clipPath>
<clipPath id="q333"><polygon points="475.8,527.3 481.5,528.6 480.0,533.5 474.4,531.9"/></clipPath>
<clipPath id="q334"><polygon points="474.4,531.7 480.1,533.3 479.1,536.4 473.5,534.8"/></clipPath>
<clipPath id="q335"><polygon points="473.6,534.5 479.2,536.2 478.3,539.4 472.7,537.6"/></clipPath>
<clipPath id="q336"><polygon points="472.8,537.3 478.3,539.2 476.9,544.0 471.4,541.9"/></clipPath>
<clipPath id="q337"><polygon points="480.1,528.3 485.8,529.6 484.3,534.7 478.7,533.1"/></clipPath>
<clipPath id="q338"><polygon points="478.7,532.9 484.4,534.4 483.4,537.7 477.8,536.0"/></clipPath>
<clipPath id="q339"><polygon points="477.9,535.8 483.5,537.5 482.5,540.8 476.9,539.0"/></clipPath>
<clipPath id="q340"><polygon points="477.0,538.7 482.6,540.6 481.1,545.6 475.6,543.5"/></clipPath>
<clipPath id="q341"><polygon points="484.4,529.3 490.1,530.6 488.6,535.8 482.9,534.3"/></clipPath>
<clipPath id="q342"><polygon points="483.0,534.1 488.7,535.6 487.6,539.0 482.0,537.3"/></clipPath>
<clipPath id="q343"><polygon points="482.1,537.1 487.7,538.8 486.7,542.2 481.1,540.4"/></clipPath>
<clipPath id="q344"><polygon points="481.2,540.1 486.8,541.9 485.2,547.1 479.7,545.1"/></clipPath>
<clipPath id="q345"><polygon points="488.7,530.3 494.5,531.6 492.9,537.0 487.2,535.5"/></clipPath>
<clipPath id="q346"><polygon points="487.3,535.2 492.9,536.8 491.9,540.3 486.3,538.6"/></clipPath>
<clipPath id="q347"><polygon points="486.4,538.4 492.0,540.0 490.9,543.6 485.4,541.7"/></clipPath>
<clipPath id="q348"><polygon points="485.4,541.5 491.0,543.3 489.4,548.7 483.9,546.6"/></clipPath>
<clipPath id="q349"><polygon points="493.1,531.3 498.8,532.6 497.1,538.2 491.5,536.6"/></clipPath>
<clipPath id="q350"><polygon points="491.6,536.4 497.2,537.9 496.1,541.6 490.5,539.9"/></clipPath>
<clipPath id="q351"><polygon points="490.6,539.6 496.2,541.3 495.1,545.0 489.6,543.1"/></clipPath>
<clipPath id="q352"><polygon points="489.6,542.9 495.2,544.7 493.6,550.3 488.1,548.2"/></clipPath>
<clipPath id="q353"><polygon points="497.4,532.3 503.1,533.6 501.4,539.4 495.8,537.8"/></clipPath>
<clipPath id="q354"><polygon points="495.9,537.6 501.5,539.1 500.4,542.9 494.8,541.2"/></clipPath>
<clipPath id="q355"><polygon points="494.9,540.9 500.5,542.6 499.4,546.4 493.8,544.5"/></clipPath>
<clipPath id="q356"><polygon points="493.9,544.3 499.4,546.1 497.7,551.8 492.2,549.8"/></clipPath>
<clipPath id="q357"><polygon points="501.7,533.3 507.5,534.6 505.7,540.6 500.1,539.0"/></clipPath>
<clipPath id="q358"><polygon points="500.1,538.7 505.8,540.3 504.6,544.2 499.0,542.5"/></clipPath>
<clipPath id="q359"><polygon points="499.1,542.2 504.7,543.9 503.6,547.8 498.0,545.9"/></clipPath>
<clipPath id="q360"><polygon points="498.1,545.7 503.7,547.5 501.9,553.4 496.4,551.3"/></clipPath>
<clipPath id="q361"><polygon points="506.1,534.3 511.8,535.6 510.0,541.7 504.3,540.2"/></clipPath>
<clipPath id="q362"><polygon points="504.4,539.9 510.1,541.4 508.9,545.4 503.3,543.8"/></clipPath>
<clipPath id="q363"><polygon points="503.4,543.5 509.0,545.1 507.8,549.2 502.2,547.3"/></clipPath>
<clipPath id="q364"><polygon points="502.3,547.0 507.9,548.9 506.1,555.0 500.6,552.9"/></clipPath>
<clipPath id="q365"><polygon points="510.4,535.3 516.1,536.6 514.3,542.9 508.6,541.4"/></clipPath>
<clipPath id="q366"><polygon points="508.7,541.1 514.4,542.6 513.1,546.7 507.5,545.0"/></clipPath>
<clipPath id="q367"><polygon points="507.6,544.7 513.2,546.4 512.0,550.6 506.4,548.7"/></clipPath>
<clipPath id="q368"><polygon points="506.5,548.4 512.1,550.3 510.2,556.5 504.7,554.5"/></clipPath>
<clipPath id="q369"><polygon points="514.7,536.3 520.4,537.6 518.5,544.1 512.9,542.5"/></clipPath>
<clipPath id="q370"><polygon points="513.0,542.2 518.6,543.8 517.4,548.0 511.8,546.3"/></clipPath>
<clipPath id="q371"><polygon points="511.9,546.0 517.5,547.7 516.2,552.0 510.7,550.1"/></clipPath>
<clipPath id="q372"><polygon points="510.7,549.8 516.3,551.6 514.4,558.1 508.9,556.0"/></clipPath>
<clipPath id="q373"><polygon points="519.1,537.3 524.8,538.6 522.8,545.3 517.2,543.7"/></clipPath>
<clipPath id="q374"><polygon points="517.3,543.4 522.9,544.9 521.6,549.3 516.0,547.6"/></clipPath>
<clipPath id="q375"><polygon points="516.1,547.3 521.7,549.0 520.4,553.4 514.9,551.5"/></clipPath>
<clipPath id="q376"><polygon points="515.0,551.2 520.5,553.0 518.6,559.7 513.1,557.6"/></clipPath>
<clipPath id="q377"><polygon points="523.4,538.3 529.1,539.6 527.1,546.4 521.5,544.9"/></clipPath>
<clipPath id="q378"><polygon points="521.5,544.6 527.2,546.1 525.9,550.6 520.3,548.9"/></clipPath>
<clipPath id="q379"><polygon points="520.4,548.6 526.0,550.3 524.7,554.7 519.1,552.9"/></clipPath>
<clipPath id="q380"><polygon points="519.2,552.6 524.8,554.4 522.7,561.2 517.2,559.2"/></clipPath>
<clipPath id="q381"><polygon points="527.7,539.3 538.3,541.7 536.2,548.9 525.7,546.1"/></clipPath>
<clipPath id="q382"><polygon points="525.8,545.7 536.3,548.6 534.9,553.3 524.5,550.2"/></clipPath>
<clipPath id="q383"><polygon points="524.6,549.8 535.0,553.0 533.6,557.7 523.3,554.3"/></clipPath>
<clipPath id="q384"><polygon points="523.4,554.0 533.7,557.4 531.6,564.6 521.4,560.7"/></clipPath>
</defs>
<g fill="none" stroke="#008c00" stroke-width="2">
 <rect x="93" y="155" width="793" height="525"/>
 <rect x="116.5" y="173" width="739.5" height="489"/>
</g>
<g stroke="#008c00" stroke-width="1">
 <line x1="93" y1="155" x2="116.5" y2="173"/>
 <line x1="886" y1="155" x2="856" y2="173"/>
 <line x1="93" y1="680" x2="116.5" y2="662"/>
 <line x1="886" y1="680" x2="856" y2="662"/>
</g>
<g clip-path="url(#s11)"><path d="M223.0 287.0Q255.5 279.0 288.0 287.0L288.0 352.0Q255.5 356.0 223.0 352.0Z" fill="#fff"/><g filter="url(#bl)"><use href="#box" transform="matrix(1.3000 0.0000 0.0000 0.6000 184.000 303.000)"/></g></g>
<g clip-path="url(#s12)"><path d="M304.0 287.0Q336.0 279.0 368.0 287.0L368.0 352.0Q336.0 345.0 304.0 352.0Z" fill="#fff"/><g filter="url(#bl)"><use href="#box" transform="matrix(0.5700 0.0000 0.0000 0.5700 305.000 303.500)"/></g></g>
<g clip-path="url(#s13)"><path d="M384.0 287.0Q415.5 279.0 447.0 287.0L447.0 352.0Q415.5 345.0 384.0 352.0Z" fill="#fff"/><g filter="url(#bl)"><use href="#box" transform="matrix(0.5450 0.0000 0.0000 0.5620 388.000 303.600)"/></g></g>
<g clip-path="url(#s14)"><path d="M463.0 287.0Q495.0 279.0 527.0 287.0L527.0 352.0Q495.0 356.0 463.0 352.0Z" fill="#fff"/><g filter="url(#bl)"><g clip-path="url(#clipTop294)"><use href="#box" transform="matrix(1.2000 0.0000 0.0000 1.2000 436.000 266.000)"/></g></g></g>
<g clip-path="url(#s21)"><path d="M223.0 367.0Q255.5 365.0 288.0 367.0L288.0 432.0Q255.5 432.0 223.0 432.0Z" fill="#fff"/><g filter="url(#bl)"><use href="#box" transform="matrix(0.9000 0.4000 -1.1300 0.2600 261.500 405.000)"/><use href="#box" transform="matrix(0.7000 0.2500 -0.5000 0.4000 164.000 371.000)"/></g></g>
<g clip-path="url(#s22)"><path d="M304.0 367.0Q336.0 365.0 368.0 367.0L368.0 432.0Q336.0 432.0 304.0 432.0Z" fill="#fff"/><g filter="url(#bl)"><use href="#box" transform="matrix(0.3600 0.4500 -0.3300 0.3500 290.000 351.000)"/><use href="#box" transform="matrix(0.3460 0.3460 -0.3540 0.3600 335.700 405.000)"/><use href="#box" transform="matrix(0.3460 0.3460 -0.3300 0.3500 338.600 315.900)"/><use href="#box" transform="matrix(0.3460 0.3460 -0.3540 0.3600 384.500 360.000)"/></g></g>
<g clip-path="url(#s23)"><path d="M384.0 367.0Q415.5 365.0 447.0 367.0L447.0 432.0Q415.5 432.0 384.0 432.0Z" fill="#fff"/><g filter="url(#bl)"><use href="#box" transform="matrix(0.3600 0.4500 -0.3300 0.3500 371.000 351.000)"/><use href="#box" transform="matrix(0.3460 0.3460 -0.3540 0.3600 416.700 405.000)"/><use href="#box" transform="matrix(0.3460 0.3460 -0.3300 0.3500 419.600 315.900)"/><use href="#box" transform="matrix(0.3460 0.3460 -0.3540 0.3600 465.500 360.000)"/></g></g>
<g clip-path="url(#s24)"><path d="M463.0 367.0Q495.0 365.0 527.0 367.0L527.0 432.0Q495.0 432.0 463.0 432.0Z" fill="#fff"/><g filter="url(#bl)"><use href="#box" transform="matrix(0.6000 0.6000 -0.8400 0.5400 508.000 392.000)"/><use href="#box" transform="matrix(0.7500 0.1000 -0.8400 0.6000 409.000 370.000)"/></g></g>
<g clip-path="url(#s31)"><path d="M223.0 447.5Q255.5 447.5 288.0 447.5L288.0 513.0Q255.5 516.0 223.0 513.0Z" fill="#fff"/><g filter="url(#bl)"><g clip-path="url(#q1)"><use href="#box" transform="matrix(0.6525 0.2475 -0.1638 0.8337 226.023 453.039)"/></g><g clip-path="url(#q2)"><use href="#box" transform="matrix(0.6375 0.2225 -0.1638 0.8337 226.070 453.117)"/></g><g clip-path="url(#q3)"><use href="#box" transform="matrix(0.6225 0.1975 -0.1638 0.8337 226.117 453.195)"/></g><g clip-path="url(#q4)"><use href="#box" transform="matrix(0.6075 0.1725 -0.1638 0.8337 226.164 453.273)"/></g><g clip-path="url(#q5)"><use href="#box" transform="matrix(0.6525 0.2475 -0.1713 0.8213 226.070 453.117)"/></g><g clip-path="url(#q6)"><use href="#box" transform="matrix(0.6375 0.2225 -0.1713 0.8213 226.211 453.352)"/></g><g clip-path="url(#q7)"><use href="#box" transform="matrix(0.6225 0.1975 -0.1713 0.8213 226.352 453.586)"/></g><g clip-path="url(#q8)"><use href="#box" transform="matrix(0.6075 0.1725 -0.1713 0.8213 226.492 453.820)"/></g><g clip-path="url(#q9)"><use href="#box" transform="matrix(0.6525 0.2475 -0.1787 0.8087 226.117 453.195)"/></g><g clip-path="url(#q10)"><use href="#box" transform="matrix(0.6375 0.2225 -0.1787 0.8087 226.352 453.586)"/></g><g clip-path="url(#q11)"><use href="#box" transform="matrix(0.6225 0.1975 -0.1787 0.8087 226.586 453.977)"/></g><g clip-path="url(#q12)"><use href="#box" transform="matrix(0.6075 0.1725 -0.1787 0.8087 226.820 454.367)"/></g><g clip-path="url(#q13)"><use href="#box" transform="matrix(0.6525 0.2475 -0.1862 0.7963 226.164 453.273)"/></g><g clip-path="url(#q14)"><use href="#box" transform="matrix(0.6375 0.2225 -0.1862 0.7963 226.492 453.820)"/></g><g clip-path="url(#q15)"><use href="#box" transform="matrix(0.6225 0.1975 -0.1862 0.7963 226.820 454.367)"/></g><g clip-path="url(#q16)"><use href="#box" transform="matrix(0.6075 0.1725 -0.1862 0.7963 227.148 454.914)"/></g><g clip-path="url(#q17)"><use href="#box" transform="matrix(0.6525 0.2475 -0.1938 0.7837 226.211 453.352)"/></g><g clip-path="url(#q18)"><use href="#box" transform="matrix(0.6375 0.2225 -0.1938 0.7837 226.633 454.055)"/></g><g clip-path="url(#q19)"><use href="#box" transform="matrix(0.6225 0.1975 -0.1938 0.7837 227.055 454.758)"/></g><g clip-path="url(#q20)"><use href="#box" transform="matrix(0.6075 0.1725 -0.1938 0.7837 227.477 455.461)"/></g><g clip-path="url(#q21)"><use href="#box" transform="matrix(0.6525 0.2475 -0.2013 0.7712 226.258 453.430)"/></g><g clip-path="url(#q22)"><use href="#box" transform="matrix(0.6375 0.2225 -0.2013 0.7712 226.773 454.289)"/></g><g clip-path="url(#q23)"><use href="#box" transform="matrix(0.6225 0.1975 -0.2013 0.7712 227.289 455.148)"/></g><g clip-path="url(#q24)"><use href="#box" transform="matrix(0.6075 0.1725 -0.2013 0.7712 227.805 456.008)"/></g><g clip-path="url(#q25)"><use href="#box" transform="matrix(0.6525 0.2475 -0.2087 0.7588 226.305 453.508)"/></g><g clip-path="url(#q26)"><use href="#box" transform="matrix(0.6375 0.2225 -0.2087 0.7588 226.914 454.523)"/></g><g clip-path="url(#q27)"><use href="#box" transform="matrix(0.6225 0.1975 -0.2087 0.7588 227.523 455.539)"/></g><g clip-path="url(#q28)"><use href="#box" transform="matrix(0.6075 0.1725 -0.2087 0.7588 228.133 456.555)"/></g><g clip-path="url(#q29)"><use href="#box" transform="matrix(0.6525 0.2475 -0.2162 0.7462 226.352 453.586)"/></g><g clip-path="url(#q30)"><use href="#box" transform="matrix(0.6375 0.2225 -0.2162 0.7462 227.055 454.758)"/></g><g clip-path="url(#q31)"><use href="#box" transform="matrix(0.6225 0.1975 -0.2162 0.7462 227.758 455.930)"/></g><g clip-path="url(#q32)"><use href="#box" transform="matrix(0.6075 0.1725 -0.2162 0.7462 228.461 457.102)"/></g><g clip-path="url(#q33)"><use href="#box" transform="matrix(0.6525 0.2475 -0.2238 0.7338 226.398 453.664)"/></g><g clip-path="url(#q34)"><use href="#box" transform="matrix(0.6375 0.2225 -0.2238 0.7338 227.195 454.992)"/></g><g clip-path="url(#q35)"><use href="#box" transform="matrix(0.6225 0.1975 -0.2238 0.7338 227.992 456.320)"/></g><g clip-path="url(#q36)"><use href="#box" transform="matrix(0.6075 0.1725 -0.2238 0.7338 228.789 457.648)"/></g><g clip-path="url(#q37)"><use href="#box" transform="matrix(0.6525 0.2475 -0.2313 0.7212 226.445 453.742)"/></g><g clip-path="url(#q38)"><use href="#box" transform="matrix(0.6375 0.2225 -0.2313 0.7212 227.336 455.227)"/></g><g clip-path="url(#q39)"><use href="#box" transform="matrix(0.6225 0.1975 -0.2313 0.7212 228.227 456.711)"/></g><g clip-path="url(#q40)"><use href="#box" transform="matrix(0.6075 0.1725 -0.2313 0.7212 229.117 458.195)"/></g><g clip-path="url(#q41)"><use href="#box" transform="matrix(0.6525 0.2475 -0.2387 0.7087 226.492 453.820)"/></g><g clip-path="url(#q42)"><use href="#box" transform="matrix(0.6375 0.2225 -0.2387 0.7087 227.477 455.461)"/></g><g clip-path="url(#q43)"><use href="#box" transform="matrix(0.6225 0.1975 -0.2387 0.7087 228.461 457.102)"/></g><g clip-path="url(#q44)"><use href="#box" transform="matrix(0.6075 0.1725 -0.2387 0.7087 229.445 458.742)"/></g><g clip-path="url(#q45)"><use href="#box" transform="matrix(0.6525 0.2475 -0.2462 0.6963 226.539 453.898)"/></g><g clip-path="url(#q46)"><use href="#box" transform="matrix(0.6375 0.2225 -0.2462 0.6963 227.617 455.695)"/></g><g clip-path="url(#q47)"><use href="#box" transform="matrix(0.6225 0.1975 -0.2462 0.6963 228.695 457.492)"/></g><g clip-path="url(#q48)"><use href="#box" transform="matrix(0.6075 0.1725 -0.2462 0.6963 229.773 459.289)"/></g><g clip-path="url(#q49)"><use href="#box" transform="matrix(0.6525 0.2475 -0.2537 0.6837 226.586 453.977)"/></g><g clip-path="url(#q50)"><use href="#box" transform="matrix(0.6375 0.2225 -0.2537 0.6837 227.758 455.930)"/></g><g clip-path="url(#q51)"><use href="#box" transform="matrix(0.6225 0.1975 -0.2537 0.6837 228.930 457.883)"/></g><g clip-path="url(#q52)"><use href="#box" transform="matrix(0.6075 0.1725 -0.2537 0.6837 230.102 459.836)"/></g><g clip-path="url(#q53)"><use href="#box" transform="matrix(0.6525 0.2475 -0.2612 0.6713 226.633 454.055)"/></g><g clip-path="url(#q54)"><use href="#box" transform="matrix(0.6375 0.2225 -0.2612 0.6713 227.898 456.164)"/></g><g clip-path="url(#q55)"><use href="#box" transform="matrix(0.6225 0.1975 -0.2612 0.6713 229.164 458.273)"/></g><g clip-path="url(#q56)"><use href="#box" transform="matrix(0.6075 0.1725 -0.2612 0.6713 230.430 460.383)"/></g><g clip-path="url(#q57)"><use href="#box" transform="matrix(0.6525 0.2475 -0.2687 0.6587 226.680 454.133)"/></g><g clip-path="url(#q58)"><use href="#box" transform="matrix(0.6375 0.2225 -0.2687 0.6587 228.039 456.398)"/></g><g clip-path="url(#q59)"><use href="#box" transform="matrix(0.6225 0.1975 -0.2687 0.6587 229.398 458.664)"/></g><g clip-path="url(#q60)"><use href="#box" transform="matrix(0.6075 0.1725 -0.2687 0.6587 230.758 460.930)"/></g><g clip-path="url(#q61)"><use href="#box" transform="matrix(0.6525 0.2475 -0.2762 0.6462 226.727 454.211)"/></g><g clip-path="url(#q62)"><use href="#box" transform="matrix(0.6375 0.2225 -0.2762 0.6462 228.180 456.633)"/></g><g clip-path="url(#q63)"><use href="#box" transform="matrix(0.6225 0.1975 -0.2762 0.6462 229.633 459.055)"/></g><g clip-path="url(#q64)"><use href="#box" transform="matrix(0.6075 0.1725 -0.2762 0.6462 231.086 461.477)"/></g></g></g>
<g clip-path="url(#s32)"><path d="M304.0 447.5Q336.0 447.5 368.0 447.5L368.0 513.0Q336.0 514.0 304.0 513.0Z" fill="#fff"/><g filter="url(#bl)"><use href="#box" transform="matrix(0.3800 0.3600 -0.3200 0.3400 323.000 455.000)"/><use href="#box" transform="matrix(0.3800 0.3600 -0.3200 0.3400 275.500 410.000)"/><use href="#box" transform="matrix(0.3800 0.3600 -0.3200 0.3400 370.500 500.000)"/></g></g>
<g clip-path="url(#s33)"><path d="M384.0 447.5Q415.5 447.5 447.0 447.5L447.0 513.0Q415.5 514.0 384.0 513.0Z" fill="#fff"/><g filter="url(#bl)"><use href="#box" transform="matrix(0.3800 0.3600 -0.3200 0.3400 405.000 455.000)"/><use href="#box" transform="matrix(0.3800 0.3600 -0.3200 0.3400 357.500 410.000)"/><use href="#box" transform="matrix(0.3800 0.3600 -0.3200 0.3400 452.500 500.000)"/></g></g>
<g clip-path="url(#s34)"><path d="M463.0 447.5Q495.0 447.5 527.0 447.5L527.0 513.0Q495.0 516.0 463.0 513.0Z" fill="#fff"/><g filter="url(#bl)"><g clip-path="url(#q65)"><use href="#box" transform="matrix(0.6375 0.1800 -0.2213 0.3550 471.008 450.906)"/></g><g clip-path="url(#q66)"><use href="#box" transform="matrix(0.6325 0.2400 -0.2213 0.3550 471.023 450.719)"/></g><g clip-path="url(#q67)"><use href="#box" transform="matrix(0.6275 0.3000 -0.2213 0.3550 471.039 450.531)"/></g><g clip-path="url(#q68)"><use href="#box" transform="matrix(0.6225 0.3600 -0.2213 0.3550 471.055 450.344)"/></g><g clip-path="url(#q69)"><use href="#box" transform="matrix(0.6375 0.1800 -0.2238 0.3850 471.023 450.719)"/></g><g clip-path="url(#q70)"><use href="#box" transform="matrix(0.6325 0.2400 -0.2238 0.3850 471.070 450.156)"/></g><g clip-path="url(#q71)"><use href="#box" transform="matrix(0.6275 0.3000 -0.2238 0.3850 471.117 449.594)"/></g><g clip-path="url(#q72)"><use href="#box" transform="matrix(0.6225 0.3600 -0.2238 0.3850 471.164 449.031)"/></g><g clip-path="url(#q73)"><use href="#box" transform="matrix(0.6375 0.1800 -0.2263 0.4150 471.039 450.531)"/></g><g clip-path="url(#q74)"><use href="#box" transform="matrix(0.6325 0.2400 -0.2263 0.4150 471.117 449.594)"/></g><g clip-path="url(#q75)"><use href="#box" transform="matrix(0.6275 0.3000 -0.2263 0.4150 471.195 448.656)"/></g><g clip-path="url(#q76)"><use href="#box" transform="matrix(0.6225 0.3600 -0.2263 0.4150 471.273 447.719)"/></g><g clip-path="url(#q77)"><use href="#box" transform="matrix(0.6375 0.1800 -0.2288 0.4450 471.055 450.344)"/></g><g clip-path="url(#q78)"><use href="#box" transform="matrix(0.6325 0.2400 -0.2288 0.4450 471.164 449.031)"/></g><g clip-path="url(#q79)"><use href="#box" transform="matrix(0.6275 0.3000 -0.2288 0.4450 471.273 447.719)"/></g><g clip-path="url(#q80)"><use href="#box" transform="matrix(0.6225 0.3600 -0.2288 0.4450 471.383 446.406)"/></g><g clip-path="url(#q81)"><use href="#box" transform="matrix(0.6375 0.1800 -0.2313 0.4750 471.070 450.156)"/></g><g clip-path="url(#q82)"><use href="#box" transform="matrix(0.6325 0.2400 -0.2313 0.4750 471.211 448.469)"/></g><g clip-path="url(#q83)"><use href="#box" transform="matrix(0.6275 0.3000 -0.2313 0.4750 471.352 446.781)"/></g><g clip-path="url(#q84)"><use href="#box" transform="matrix(0.6225 0.3600 -0.2313 0.4750 471.492 445.094)"/></g><g clip-path="url(#q85)"><use href="#box" transform="matrix(0.6375 0.1800 -0.2338 0.5050 471.086 449.969)"/></g><g clip-path="url(#q86)"><use href="#box" transform="matrix(0.6325 0.2400 -0.2338 0.5050 471.258 447.906)"/></g><g clip-path="url(#q87)"><use href="#box" transform="matrix(0.6275 0.3000 -0.2338 0.5050 471.430 445.844)"/></g><g clip-path="url(#q88)"><use href="#box" transform="matrix(0.6225 0.3600 -0.2338 0.5050 471.602 443.781)"/></g><g clip-path="url(#q89)"><use href="#box" transform="matrix(0.6375 0.1800 -0.2362 0.5350 471.102 449.781)"/></g><g clip-path="url(#q90)"><use href="#box" transform="matrix(0.6325 0.2400 -0.2362 0.5350 471.305 447.344)"/></g><g clip-path="url(#q91)"><use href="#box" transform="matrix(0.6275 0.3000 -0.2362 0.5350 471.508 444.906)"/></g><g clip-path="url(#q92)"><use href="#box" transform="matrix(0.6225 0.3600 -0.2362 0.5350 471.711 442.469)"/></g><g clip-path="url(#q93)"><use href="#box" transform="matrix(0.6375 0.1800 -0.2387 0.5650 471.117 449.594)"/></g><g clip-path="url(#q94)"><use href="#box" transform="matrix(0.6325 0.2400 -0.2387 0.5650 471.352 446.781)"/></g><g clip-path="url(#q95)"><use href="#box" transform="matrix(0.6275 0.3000 -0.2387 0.5650 471.586 443.969)"/></g><g clip-path="url(#q96)"><use href="#box" transform="matrix(0.6225 0.3600 -0.2387 0.5650 471.820 441.156)"/></g><g clip-path="url(#q97)"><use href="#box" transform="matrix(0.6375 0.1800 -0.2412 0.5950 471.133 449.406)"/></g><g clip-path="url(#q98)"><use href="#box" transform="matrix(0.6325 0.2400 -0.2412 0.5950 471.398 446.219)"/></g><g clip-path="url(#q99)"><use href="#box" transform="matrix(0.6275 0.3000 -0.2412 0.5950 471.664 443.031)"/></g><g clip-path="url(#q100)"><use href="#box" transform="matrix(0.6225 0.3600 -0.2412 0.5950 471.930 439.844)"/></g><g clip-path="url(#q101)"><use href="#box" transform="matrix(0.6375 0.1800 -0.2437 0.6250 471.148 449.219)"/></g><g clip-path="url(#q102)"><use href="#box" transform="matrix(0.6325 0.2400 -0.2437 0.6250 471.445 445.656)"/></g><g clip-path="url(#q103)"><use href="#box" transform="matrix(0.6275 0.3000 -0.2437 0.6250 471.742 442.094)"/></g><g clip-path="url(#q104)"><use href="#box" transform="matrix(0.6225 0.3600 -0.2437 0.6250 472.039 438.531)"/></g><g clip-path="url(#q105)"><use href="#box" transform="matrix(0.6375 0.1800 -0.2462 0.6550 471.164 449.031)"/></g><g clip-path="url(#q106)"><use href="#box" transform="matrix(0.6325 0.2400 -0.2462 0.6550 471.492 445.094)"/></g><g clip-path="url(#q107)"><use href="#box" transform="matrix(0.6275 0.3000 -0.2462 0.6550 471.820 441.156)"/></g><g clip-path="url(#q108)"><use href="#box" transform="matrix(0.6225 0.3600 -0.2462 0.6550 472.148 437.219)"/></g><g clip-path="url(#q109)"><use href="#box" transform="matrix(0.6375 0.1800 -0.2487 0.6850 471.180 448.844)"/></g><g clip-path="url(#q110)"><use href="#box" transform="matrix(0.6325 0.2400 -0.2487 0.6850 471.539 444.531)"/></g><g clip-path="url(#q111)"><use href="#box" transform="matrix(0.6275 0.3000 -0.2487 0.6850 471.898 440.219)"/></g><g clip-path="url(#q112)"><use href="#box" transform="matrix(0.6225 0.3600 -0.2487 0.6850 472.258 435.906)"/></g><g clip-path="url(#q113)"><use href="#box" transform="matrix(0.6375 0.1800 -0.2512 0.7150 471.195 448.656)"/></g><g clip-path="url(#q114)"><use href="#box" transform="matrix(0.6325 0.2400 -0.2512 0.7150 471.586 443.969)"/></g><g clip-path="url(#q115)"><use href="#box" transform="matrix(0.6275 0.3000 -0.2512 0.7150 471.977 439.281)"/></g><g clip-path="url(#q116)"><use href="#box" transform="matrix(0.6225 0.3600 -0.2512 0.7150 472.367 434.594)"/></g><g clip-path="url(#q117)"><use href="#box" transform="matrix(0.6375 0.1800 -0.2537 0.7450 471.211 448.469)"/></g><g clip-path="url(#q118)"><use href="#box" transform="matrix(0.6325 0.2400 -0.2537 0.7450 471.633 443.406)"/></g><g clip-path="url(#q119)"><use href="#box" transform="matrix(0.6275 0.3000 -0.2537 0.7450 472.055 438.344)"/></g><g clip-path="url(#q120)"><use href="#box" transform="matrix(0.6225 0.3600 -0.2537 0.7450 472.477 433.281)"/></g><g clip-path="url(#q121)"><use href="#box" transform="matrix(0.6375 0.1800 -0.2562 0.7750 471.227 448.281)"/></g><g clip-path="url(#q122)"><use href="#box" transform="matrix(0.6325 0.2400 -0.2562 0.7750 471.680 442.844)"/></g><g clip-path="url(#q123)"><use href="#box" transform="matrix(0.6275 0.3000 -0.2562 0.7750 472.133 437.406)"/></g><g clip-path="url(#q124)"><use href="#box" transform="matrix(0.6225 0.3600 -0.2562 0.7750 472.586 431.969)"/></g><g clip-path="url(#q125)"><use href="#box" transform="matrix(0.6375 0.1800 -0.2587 0.8050 471.242 448.094)"/></g><g clip-path="url(#q126)"><use href="#box" transform="matrix(0.6325 0.2400 -0.2587 0.8050 471.727 442.281)"/></g><g clip-path="url(#q127)"><use href="#box" transform="matrix(0.6275 0.3000 -0.2587 0.8050 472.211 436.469)"/></g><g clip-path="url(#q128)"><use href="#box" transform="matrix(0.6225 0.3600 -0.2587 0.8050 472.695 430.656)"/></g></g></g>
<g clip-path="url(#s41)"><path d="M223.0 527.0Q255.5 521.0 288.0 527.0L288.0 593.5Q255.5 600.5 223.0 593.5Z" fill="#fff"/><g filter="url(#bl)"><g clip-path="url(#q129)"><use href="#box" transform="matrix(0.6100 0.1237 -0.1100 0.2019 224.062 530.988)"/></g><g clip-path="url(#q130)"><use href="#box" transform="matrix(0.5700 0.1313 -0.1100 0.2019 224.188 530.965)"/></g><g clip-path="url(#q131)"><use href="#box" transform="matrix(0.5300 0.1388 -0.1100 0.2019 224.312 530.941)"/></g><g clip-path="url(#q132)"><use href="#box" transform="matrix(0.4900 0.1462 -0.1100 0.2019 224.438 530.918)"/></g><g clip-path="url(#q133)"><use href="#box" transform="matrix(0.6100 0.1237 -0.1300 0.2056 224.188 530.965)"/></g><g clip-path="url(#q134)"><use href="#box" transform="matrix(0.5700 0.1313 -0.1300 0.2056 224.562 530.895)"/></g><g clip-path="url(#q135)"><use href="#box" transform="matrix(0.5300 0.1388 -0.1300 0.2056 224.938 530.824)"/></g><g clip-path="url(#q136)"><use href="#box" transform="matrix(0.4900 0.1462 -0.1300 0.2056 225.312 530.754)"/></g><g clip-path="url(#q137)"><use href="#box" transform="matrix(0.6100 0.1237 -0.1500 0.2094 224.312 530.941)"/></g><g clip-path="url(#q138)"><use href="#box" transform="matrix(0.5700 0.1313 -0.1500 0.2094 224.938 530.824)"/></g><g clip-path="url(#q139)"><use href="#box" transform="matrix(0.5300 0.1388 -0.1500 0.2094 225.562 530.707)"/></g><g clip-path="url(#q140)"><use href="#box" transform="matrix(0.4900 0.1462 -0.1500 0.2094 226.188 530.590)"/></g><g clip-path="url(#q141)"><use href="#box" transform="matrix(0.6100 0.1237 -0.1700 0.2131 224.438 530.918)"/></g><g clip-path="url(#q142)"><use href="#box" transform="matrix(0.5700 0.1313 -0.1700 0.2131 225.312 530.754)"/></g><g clip-path="url(#q143)"><use href="#box" transform="matrix(0.5300 0.1388 -0.1700 0.2131 226.188 530.590)"/></g><g clip-path="url(#q144)"><use href="#box" transform="matrix(0.4900 0.1462 -0.1700 0.2131 227.062 530.426)"/></g><g clip-path="url(#q145)"><use href="#box" transform="matrix(0.6100 0.1237 -0.1900 0.2169 224.562 530.895)"/></g><g clip-path="url(#q146)"><use href="#box" transform="matrix(0.5700 0.1313 -0.1900 0.2169 225.688 530.684)"/></g><g clip-path="url(#q147)"><use href="#box" transform="matrix(0.5300 0.1388 -0.1900 0.2169 226.812 530.473)"/></g><g clip-path="url(#q148)"><use href="#box" transform="matrix(0.4900 0.1462 -0.1900 0.2169 227.938 530.262)"/></g><g clip-path="url(#q149)"><use href="#box" transform="matrix(0.6100 0.1237 -0.2100 0.2206 224.688 530.871)"/></g><g clip-path="url(#q150)"><use href="#box" transform="matrix(0.5700 0.1313 -0.2100 0.2206 226.062 530.613)"/></g><g clip-path="url(#q151)"><use href="#box" transform="matrix(0.5300 0.1388 -0.2100 0.2206 227.438 530.355)"/></g><g clip-path="url(#q152)"><use href="#box" transform="matrix(0.4900 0.1462 -0.2100 0.2206 228.812 530.098)"/></g><g clip-path="url(#q153)"><use href="#box" transform="matrix(0.6100 0.1237 -0.2300 0.2244 224.812 530.848)"/></g><g clip-path="url(#q154)"><use href="#box" transform="matrix(0.5700 0.1313 -0.2300 0.2244 226.438 530.543)"/></g><g clip-path="url(#q155)"><use href="#box" transform="matrix(0.5300 0.1388 -0.2300 0.2244 228.062 530.238)"/></g><g clip-path="url(#q156)"><use href="#box" transform="matrix(0.4900 0.1462 -0.2300 0.2244 229.688 529.934)"/></g><g clip-path="url(#q157)"><use href="#box" transform="matrix(0.6100 0.1237 -0.2500 0.2281 224.938 530.824)"/></g><g clip-path="url(#q158)"><use href="#box" transform="matrix(0.5700 0.1313 -0.2500 0.2281 226.812 530.473)"/></g><g clip-path="url(#q159)"><use href="#box" transform="matrix(0.5300 0.1388 -0.2500 0.2281 228.688 530.121)"/></g><g clip-path="url(#q160)"><use href="#box" transform="matrix(0.4900 0.1462 -0.2500 0.2281 230.562 529.770)"/></g><g clip-path="url(#q161)"><use href="#box" transform="matrix(0.6100 0.1237 -0.2700 0.2319 225.062 530.801)"/></g><g clip-path="url(#q162)"><use href="#box" transform="matrix(0.5700 0.1313 -0.2700 0.2319 227.188 530.402)"/></g><g clip-path="url(#q163)"><use href="#box" transform="matrix(0.5300 0.1388 -0.2700 0.2319 229.312 530.004)"/></g><g clip-path="url(#q164)"><use href="#box" transform="matrix(0.4900 0.1462 -0.2700 0.2319 231.438 529.605)"/></g><g clip-path="url(#q165)"><use href="#box" transform="matrix(0.6100 0.1237 -0.2900 0.2356 225.188 530.777)"/></g><g clip-path="url(#q166)"><use href="#box" transform="matrix(0.5700 0.1313 -0.2900 0.2356 227.562 530.332)"/></g><g clip-path="url(#q167)"><use href="#box" transform="matrix(0.5300 0.1388 -0.2900 0.2356 229.938 529.887)"/></g><g clip-path="url(#q168)"><use href="#box" transform="matrix(0.4900 0.1462 -0.2900 0.2356 232.312 529.441)"/></g><g clip-path="url(#q169)"><use href="#box" transform="matrix(0.6100 0.1237 -0.3100 0.2394 225.312 530.754)"/></g><g clip-path="url(#q170)"><use href="#box" transform="matrix(0.5700 0.1313 -0.3100 0.2394 227.938 530.262)"/></g><g clip-path="url(#q171)"><use href="#box" transform="matrix(0.5300 0.1388 -0.3100 0.2394 230.562 529.770)"/></g><g clip-path="url(#q172)"><use href="#box" transform="matrix(0.4900 0.1462 -0.3100 0.2394 233.188 529.277)"/></g><g clip-path="url(#q173)"><use href="#box" transform="matrix(0.6100 0.1237 -0.3300 0.2431 225.438 530.730)"/></g><g clip-path="url(#q174)"><use href="#box" transform="matrix(0.5700 0.1313 -0.3300 0.2431 228.312 530.191)"/></g><g clip-path="url(#q175)"><use href="#box" transform="matrix(0.5300 0.1388 -0.3300 0.2431 231.188 529.652)"/></g><g clip-path="url(#q176)"><use href="#box" transform="matrix(0.4900 0.1462 -0.3300 0.2431 234.062 529.113)"/></g><g clip-path="url(#q177)"><use href="#box" transform="matrix(0.6100 0.1237 -0.3500 0.2469 225.562 530.707)"/></g><g clip-path="url(#q178)"><use href="#box" transform="matrix(0.5700 0.1313 -0.3500 0.2469 228.688 530.121)"/></g><g clip-path="url(#q179)"><use href="#box" transform="matrix(0.5300 0.1388 -0.3500 0.2469 231.812 529.535)"/></g><g clip-path="url(#q180)"><use href="#box" transform="matrix(0.4900 0.1462 -0.3500 0.2469 234.938 528.949)"/></g><g clip-path="url(#q181)"><use href="#box" transform="matrix(0.6100 0.1237 -0.3700 0.2506 225.688 530.684)"/></g><g clip-path="url(#q182)"><use href="#box" transform="matrix(0.5700 0.1313 -0.3700 0.2506 229.062 530.051)"/></g><g clip-path="url(#q183)"><use href="#box" transform="matrix(0.5300 0.1388 -0.3700 0.2506 232.438 529.418)"/></g><g clip-path="url(#q184)"><use href="#box" transform="matrix(0.4900 0.1462 -0.3700 0.2506 235.812 528.785)"/></g><g clip-path="url(#q185)"><use href="#box" transform="matrix(0.6100 0.1237 -0.3900 0.2544 225.812 530.660)"/></g><g clip-path="url(#q186)"><use href="#box" transform="matrix(0.5700 0.1313 -0.3900 0.2544 229.438 529.980)"/></g><g clip-path="url(#q187)"><use href="#box" transform="matrix(0.5300 0.1388 -0.3900 0.2544 233.062 529.301)"/></g><g clip-path="url(#q188)"><use href="#box" transform="matrix(0.4900 0.1462 -0.3900 0.2544 236.688 528.621)"/></g><g clip-path="url(#q189)"><use href="#box" transform="matrix(0.6100 0.1237 -0.4100 0.2581 225.938 530.637)"/></g><g clip-path="url(#q190)"><use href="#box" transform="matrix(0.5700 0.1313 -0.4100 0.2581 229.812 529.910)"/></g><g clip-path="url(#q191)"><use href="#box" transform="matrix(0.5300 0.1388 -0.4100 0.2581 233.688 529.184)"/></g><g clip-path="url(#q192)"><use href="#box" transform="matrix(0.4900 0.1462 -0.4100 0.2581 237.562 528.457)"/></g><g clip-path="url(#q193)"><use href="#box" transform="matrix(0.5475 0.1500 -0.2263 0.2200 231.039 574.000)"/></g><g clip-path="url(#q194)"><use href="#box" transform="matrix(0.5225 0.1500 -0.2263 0.2200 231.117 574.000)"/></g><g clip-path="url(#q195)"><use href="#box" transform="matrix(0.4975 0.1500 -0.2263 0.2200 231.195 574.000)"/></g><g clip-path="url(#q196)"><use href="#box" transform="matrix(0.4725 0.1500 -0.2263 0.2200 231.273 574.000)"/></g><g clip-path="url(#q197)"><use href="#box" transform="matrix(0.5475 0.1500 -0.2387 0.2200 231.117 574.000)"/></g><g clip-path="url(#q198)"><use href="#box" transform="matrix(0.5225 0.1500 -0.2387 0.2200 231.352 574.000)"/></g><g clip-path="url(#q199)"><use href="#box" transform="matrix(0.4975 0.1500 -0.2387 0.2200 231.586 574.000)"/></g><g clip-path="url(#q200)"><use href="#box" transform="matrix(0.4725 0.1500 -0.2387 0.2200 231.820 574.000)"/></g><g clip-path="url(#q201)"><use href="#box" transform="matrix(0.5475 0.1500 -0.2512 0.2200 231.195 574.000)"/></g><g clip-path="url(#q202)"><use href="#box" transform="matrix(0.5225 0.1500 -0.2512 0.2200 231.586 574.000)"/></g><g clip-path="url(#q203)"><use href="#box" transform="matrix(0.4975 0.1500 -0.2512 0.2200 231.977 574.000)"/></g><g clip-path="url(#q204)"><use href="#box" transform="matrix(0.4725 0.1500 -0.2512 0.2200 232.367 574.000)"/></g><g clip-path="url(#q205)"><use href="#box" transform="matrix(0.5475 0.1500 -0.2637 0.2200 231.273 574.000)"/></g><g clip-path="url(#q206)"><use href="#box" transform="matrix(0.5225 0.1500 -0.2637 0.2200 231.820 574.000)"/></g><g clip-path="url(#q207)"><use href="#box" transform="matrix(0.4975 0.1500 -0.2637 0.2200 232.367 574.000)"/></g><g clip-path="url(#q208)"><use href="#box" transform="matrix(0.4725 0.1500 -0.2637 0.2200 232.914 574.000)"/></g><g clip-path="url(#q209)"><use href="#box" transform="matrix(0.5475 0.1500 -0.2762 0.2200 231.352 574.000)"/></g><g clip-path="url(#q210)"><use href="#box" transform="matrix(0.5225 0.1500 -0.2762 0.2200 232.055 574.000)"/></g><g clip-path="url(#q211)"><use href="#box" transform="matrix(0.4975 0.1500 -0.2762 0.2200 232.758 574.000)"/></g><g clip-path="url(#q212)"><use href="#box" transform="matrix(0.4725 0.1500 -0.2762 0.2200 233.461 574.000)"/></g><g clip-path="url(#q213)"><use href="#box" transform="matrix(0.5475 0.1500 -0.2888 0.2200 231.430 574.000)"/></g><g clip-path="url(#q214)"><use href="#box" transform="matrix(0.5225 0.1500 -0.2888 0.2200 232.289 574.000)"/></g><g clip-path="url(#q215)"><use href="#box" transform="matrix(0.4975 0.1500 -0.2888 0.2200 233.148 574.000)"/></g><g clip-path="url(#q216)"><use href="#box" transform="matrix(0.4725 0.1500 -0.2888 0.2200 234.008 574.000)"/></g><g clip-path="url(#q217)"><use href="#box" transform="matrix(0.5475 0.1500 -0.3013 0.2200 231.508 574.000)"/></g><g clip-path="url(#q218)"><use href="#box" transform="matrix(0.5225 0.1500 -0.3013 0.2200 232.523 574.000)"/></g><g clip-path="url(#q219)"><use href="#box" transform="matrix(0.4975 0.1500 -0.3013 0.2200 233.539 574.000)"/></g><g clip-path="url(#q220)"><use href="#box" transform="matrix(0.4725 0.1500 -0.3013 0.2200 234.555 574.000)"/></g><g clip-path="url(#q221)"><use href="#box" transform="matrix(0.5475 0.1500 -0.3137 0.2200 231.586 574.000)"/></g><g clip-path="url(#q222)"><use href="#box" transform="matrix(0.5225 0.1500 -0.3137 0.2200 232.758 574.000)"/></g><g clip-path="url(#q223)"><use href="#box" transform="matrix(0.4975 0.1500 -0.3137 0.2200 233.930 574.000)"/></g><g clip-path="url(#q224)"><use href="#box" transform="matrix(0.4725 0.1500 -0.3137 0.2200 235.102 574.000)"/></g><g clip-path="url(#q225)"><use href="#box" transform="matrix(0.5475 0.1500 -0.3262 0.2200 231.664 574.000)"/></g><g clip-path="url(#q226)"><use href="#box" transform="matrix(0.5225 0.1500 -0.3262 0.2200 232.992 574.000)"/></g><g clip-path="url(#q227)"><use href="#box" transform="matrix(0.4975 0.1500 -0.3262 0.2200 234.320 574.000)"/></g><g clip-path="url(#q228)"><use href="#box" transform="matrix(0.4725 0.1500 -0.3262 0.2200 235.648 574.000)"/></g><g clip-path="url(#q229)"><use href="#box" transform="matrix(0.5475 0.1500 -0.3387 0.2200 231.742 574.000)"/></g><g clip-path="url(#q230)"><use href="#box" transform="matrix(0.5225 0.1500 -0.3387 0.2200 233.227 574.000)"/></g><g clip-path="url(#q231)"><use href="#box" transform="matrix(0.4975 0.1500 -0.3387 0.2200 234.711 574.000)"/></g><g clip-path="url(#q232)"><use href="#box" transform="matrix(0.4725 0.1500 -0.3387 0.2200 236.195 574.000)"/></g><g clip-path="url(#q233)"><use href="#box" transform="matrix(0.5475 0.1500 -0.3513 0.2200 231.820 574.000)"/></g><g clip-path="url(#q234)"><use href="#box" transform="matrix(0.5225 0.1500 -0.3513 0.2200 233.461 574.000)"/></g><g clip-path="url(#q235)"><use href="#box" transform="matrix(0.4975 0.1500 -0.3513 0.2200 235.102 574.000)"/></g><g clip-path="url(#q236)"><use href="#box" transform="matrix(0.4725 0.1500 -0.3513 0.2200 236.742 574.000)"/></g><g clip-path="url(#q237)"><use href="#box" transform="matrix(0.5475 0.1500 -0.3638 0.2200 231.898 574.000)"/></g><g clip-path="url(#q238)"><use href="#box" transform="matrix(0.5225 0.1500 -0.3638 0.2200 233.695 574.000)"/></g><g clip-path="url(#q239)"><use href="#box" transform="matrix(0.4975 0.1500 -0.3638 0.2200 235.492 574.000)"/></g><g clip-path="url(#q240)"><use href="#box" transform="matrix(0.4725 0.1500 -0.3638 0.2200 237.289 574.000)"/></g><g clip-path="url(#q241)"><use href="#box" transform="matrix(0.5475 0.1500 -0.3762 0.2200 231.977 574.000)"/></g><g clip-path="url(#q242)"><use href="#box" transform="matrix(0.5225 0.1500 -0.3762 0.2200 233.930 574.000)"/></g><g clip-path="url(#q243)"><use href="#box" transform="matrix(0.4975 0.1500 -0.3762 0.2200 235.883 574.000)"/></g><g clip-path="url(#q244)"><use href="#box" transform="matrix(0.4725 0.1500 -0.3762 0.2200 237.836 574.000)"/></g><g clip-path="url(#q245)"><use href="#box" transform="matrix(0.5475 0.1500 -0.3887 0.2200 232.055 574.000)"/></g><g clip-path="url(#q246)"><use href="#box" transform="matrix(0.5225 0.1500 -0.3887 0.2200 234.164 574.000)"/></g><g clip-path="url(#q247)"><use href="#box" transform="matrix(0.4975 0.1500 -0.3887 0.2200 236.273 574.000)"/></g><g clip-path="url(#q248)"><use href="#box" transform="matrix(0.4725 0.1500 -0.3887 0.2200 238.383 574.000)"/></g><g clip-path="url(#q249)"><use href="#box" transform="matrix(0.5475 0.1500 -0.4012 0.2200 232.133 574.000)"/></g><g clip-path="url(#q250)"><use href="#box" transform="matrix(0.5225 0.1500 -0.4012 0.2200 234.398 574.000)"/></g><g clip-path="url(#q251)"><use href="#box" transform="matrix(0.4975 0.1500 -0.4012 0.2200 236.664 574.000)"/></g><g clip-path="url(#q252)"><use href="#box" transform="matrix(0.4725 0.1500 -0.4012 0.2200 238.930 574.000)"/></g><g clip-path="url(#q253)"><use href="#box" transform="matrix(0.5475 0.1500 -0.4138 0.2200 232.211 574.000)"/></g><g clip-path="url(#q254)"><use href="#box" transform="matrix(0.5225 0.1500 -0.4138 0.2200 234.633 574.000)"/></g><g clip-path="url(#q255)"><use href="#box" transform="matrix(0.4975 0.1500 -0.4138 0.2200 237.055 574.000)"/></g><g clip-path="url(#q256)"><use href="#box" transform="matrix(0.4725 0.1500 -0.4138 0.2200 239.477 574.000)"/></g><g clip-path="url(#q257)"><use href="#box" transform="matrix(0.5725 0.1437 -0.1288 0.2219 281.055 547.988)"/></g><g clip-path="url(#q258)"><use href="#box" transform="matrix(0.5375 0.1512 -0.1288 0.2219 281.164 547.965)"/></g><g clip-path="url(#q259)"><use href="#box" transform="matrix(0.5025 0.1588 -0.1288 0.2219 281.273 547.941)"/></g><g clip-path="url(#q260)"><use href="#box" transform="matrix(0.4675 0.1663 -0.1288 0.2219 281.383 547.918)"/></g><g clip-path="url(#q261)"><use href="#box" transform="matrix(0.5725 0.1437 -0.1462 0.2256 281.164 547.965)"/></g><g clip-path="url(#q262)"><use href="#box" transform="matrix(0.5375 0.1512 -0.1462 0.2256 281.492 547.895)"/></g><g clip-path="url(#q263)"><use href="#box" transform="matrix(0.5025 0.1588 -0.1462 0.2256 281.820 547.824)"/></g><g clip-path="url(#q264)"><use href="#box" transform="matrix(0.4675 0.1663 -0.1462 0.2256 282.148 547.754)"/></g><g clip-path="url(#q265)"><use href="#box" transform="matrix(0.5725 0.1437 -0.1638 0.2294 281.273 547.941)"/></g><g clip-path="url(#q266)"><use href="#box" transform="matrix(0.5375 0.1512 -0.1638 0.2294 281.820 547.824)"/></g><g clip-path="url(#q267)"><use href="#box" transform="matrix(0.5025 0.1588 -0.1638 0.2294 282.367 547.707)"/></g><g clip-path="url(#q268)"><use href="#box" transform="matrix(0.4675 0.1663 -0.1638 0.2294 282.914 547.590)"/></g><g clip-path="url(#q269)"><use href="#box" transform="matrix(0.5725 0.1437 -0.1812 0.2331 281.383 547.918)"/></g><g clip-path="url(#q270)"><use href="#box" transform="matrix(0.5375 0.1512 -0.1812 0.2331 282.148 547.754)"/></g><g clip-path="url(#q271)"><use href="#box" transform="matrix(0.5025 0.1588 -0.1812 0.2331 282.914 547.590)"/></g><g clip-path="url(#q272)"><use href="#box" transform="matrix(0.4675 0.1663 -0.1812 0.2331 283.680 547.426)"/></g><g clip-path="url(#q273)"><use href="#box" transform="matrix(0.5725 0.1437 -0.1988 0.2369 281.492 547.895)"/></g><g clip-path="url(#q274)"><use href="#box" transform="matrix(0.5375 0.1512 -0.1988 0.2369 282.477 547.684)"/></g><g clip-path="url(#q275)"><use href="#box" transform="matrix(0.5025 0.1588 -0.1988 0.2369 283.461 547.473)"/></g><g clip-path="url(#q276)"><use href="#box" transform="matrix(0.4675 0.1663 -0.1988 0.2369 284.445 547.262)"/></g><g clip-path="url(#q277)"><use href="#box" transform="matrix(0.5725 0.1437 -0.2162 0.2406 281.602 547.871)"/></g><g clip-path="url(#q278)"><use href="#box" transform="matrix(0.5375 0.1512 -0.2162 0.2406 282.805 547.613)"/></g><g clip-path="url(#q279)"><use href="#box" transform="matrix(0.5025 0.1588 -0.2162 0.2406 284.008 547.355)"/></g><g clip-path="url(#q280)"><use href="#box" transform="matrix(0.4675 0.1663 -0.2162 0.2406 285.211 547.098)"/></g><g clip-path="url(#q281)"><use href="#box" transform="matrix(0.5725 0.1437 -0.2338 0.2444 281.711 547.848)"/></g><g clip-path="url(#q282)"><use href="#box" transform="matrix(0.5375 0.1512 -0.2338 0.2444 283.133 547.543)"/></g><g clip-path="url(#q283)"><use href="#box" transform="matrix(0.5025 0.1588 -0.2338 0.2444 284.555 547.238)"/></g><g clip-path="url(#q284)"><use href="#box" transform="matrix(0.4675 0.1663 -0.2338 0.2444 285.977 546.934)"/></g><g clip-path="url(#q285)"><use href="#box" transform="matrix(0.5725 0.1437 -0.2512 0.2481 281.820 547.824)"/></g><g clip-path="url(#q286)"><use href="#box" transform="matrix(0.5375 0.1512 -0.2512 0.2481 283.461 547.473)"/></g><g clip-path="url(#q287)"><use href="#box" transform="matrix(0.5025 0.1588 -0.2512 0.2481 285.102 547.121)"/></g><g clip-path="url(#q288)"><use href="#box" transform="matrix(0.4675 0.1663 -0.2512 0.2481 286.742 546.770)"/></g><g clip-path="url(#q289)"><use href="#box" transform="matrix(0.5725 0.1437 -0.2687 0.2519 281.930 547.801)"/></g><g clip-path="url(#q290)"><use href="#box" transform="matrix(0.5375 0.1512 -0.2687 0.2519 283.789 547.402)"/></g><g clip-path="url(#q291)"><use href="#box" transform="matrix(0.5025 0.1588 -0.2687 0.2519 285.648 547.004)"/></g><g clip-path="url(#q292)"><use href="#box" transform="matrix(0.4675 0.1663 -0.2687 0.2519 287.508 546.605)"/></g><g clip-path="url(#q293)"><use href="#box" transform="matrix(0.5725 0.1437 -0.2863 0.2556 282.039 547.777)"/></g><g clip-path="url(#q294)"><use href="#box" transform="matrix(0.5375 0.1512 -0.2863 0.2556 284.117 547.332)"/></g><g clip-path="url(#q295)"><use href="#box" transform="matrix(0.5025 0.1588 -0.2863 0.2556 286.195 546.887)"/></g><g clip-path="url(#q296)"><use href="#box" transform="matrix(0.4675 0.1663 -0.2863 0.2556 288.273 546.441)"/></g><g clip-path="url(#q297)"><use href="#box" transform="matrix(0.5725 0.1437 -0.3038 0.2594 282.148 547.754)"/></g><g clip-path="url(#q298)"><use href="#box" transform="matrix(0.5375 0.1512 -0.3038 0.2594 284.445 547.262)"/></g><g clip-path="url(#q299)"><use href="#box" transform="matrix(0.5025 0.1588 -0.3038 0.2594 286.742 546.770)"/></g><g clip-path="url(#q300)"><use href="#box" transform="matrix(0.4675 0.1663 -0.3038 0.2594 289.039 546.277)"/></g><g clip-path="url(#q301)"><use href="#box" transform="matrix(0.5725 0.1437 -0.3212 0.2631 282.258 547.730)"/></g><g clip-path="url(#q302)"><use href="#box" transform="matrix(0.5375 0.1512 -0.3212 0.2631 284.773 547.191)"/></g><g clip-path="url(#q303)"><use href="#box" transform="matrix(0.5025 0.1588 -0.3212 0.2631 287.289 546.652)"/></g><g clip-path="url(#q304)"><use href="#box" transform="matrix(0.4675 0.1663 -0.3212 0.2631 289.805 546.113)"/></g><g clip-path="url(#q305)"><use href="#box" transform="matrix(0.5725 0.1437 -0.3387 0.2669 282.367 547.707)"/></g><g clip-path="url(#q306)"><use href="#box" transform="matrix(0.5375 0.1512 -0.3387 0.2669 285.102 547.121)"/></g><g clip-path="url(#q307)"><use href="#box" transform="matrix(0.5025 0.1588 -0.3387 0.2669 287.836 546.535)"/></g><g clip-path="url(#q308)"><use href="#box" transform="matrix(0.4675 0.1663 -0.3387 0.2669 290.570 545.949)"/></g><g clip-path="url(#q309)"><use href="#box" transform="matrix(0.5725 0.1437 -0.3563 0.2706 282.477 547.684)"/></g><g clip-path="url(#q310)"><use href="#box" transform="matrix(0.5375 0.1512 -0.3563 0.2706 285.430 547.051)"/></g><g clip-path="url(#q311)"><use href="#box" transform="matrix(0.5025 0.1588 -0.3563 0.2706 288.383 546.418)"/></g><g clip-path="url(#q312)"><use href="#box" transform="matrix(0.4675 0.1663 -0.3563 0.2706 291.336 545.785)"/></g><g clip-path="url(#q313)"><use href="#box" transform="matrix(0.5725 0.1437 -0.3738 0.2744 282.586 547.660)"/></g><g clip-path="url(#q314)"><use href="#box" transform="matrix(0.5375 0.1512 -0.3738 0.2744 285.758 546.980)"/></g><g clip-path="url(#q315)"><use href="#box" transform="matrix(0.5025 0.1588 -0.3738 0.2744 288.930 546.301)"/></g><g clip-path="url(#q316)"><use href="#box" transform="matrix(0.4675 0.1663 -0.3738 0.2744 292.102 545.621)"/></g><g clip-path="url(#q317)"><use href="#box" transform="matrix(0.5725 0.1437 -0.3912 0.2781 282.695 547.637)"/></g><g clip-path="url(#q318)"><use href="#box" transform="matrix(0.5375 0.1512 -0.3912 0.2781 286.086 546.910)"/></g><g clip-path="url(#q319)"><use href="#box" transform="matrix(0.5025 0.1588 -0.3912 0.2781 289.477 546.184)"/></g><g clip-path="url(#q320)"><use href="#box" transform="matrix(0.4675 0.1663 -0.3912 0.2781 292.867 545.457)"/></g></g></g>
<g clip-path="url(#s42)"><path d="M304.0 528.0Q336.0 533.0 368.0 528.0L368.0 591.5Q336.0 602.5 304.0 591.5Z" fill="#fff"/><g filter="url(#bl)"><use href="#box" transform="matrix(0.1900 0.1850 -0.1720 0.1700 301.200 506.800)"/><use href="#box" transform="matrix(0.1900 0.1850 -0.1720 0.1700 346.450 508.675)"/><use href="#box" transform="matrix(0.1900 0.1850 -0.1720 0.1700 324.950 529.925)"/><use href="#box" transform="matrix(0.1900 0.1850 -0.1720 0.1700 303.450 551.175)"/><use href="#box" transform="matrix(0.1900 0.1850 -0.1720 0.1700 281.950 572.425)"/><use href="#box" transform="matrix(0.1900 0.1850 -0.1720 0.1700 370.200 531.800)"/><use href="#box" transform="matrix(0.1900 0.1850 -0.1720 0.1700 348.700 553.050)"/><use href="#box" transform="matrix(0.1900 0.1850 -0.1720 0.1700 327.200 574.300)"/><use href="#box" transform="matrix(0.1900 0.1850 -0.1720 0.1700 305.700 595.550)"/><use href="#box" transform="matrix(0.1900 0.1850 -0.1720 0.1700 372.450 576.175)"/><use href="#box" transform="matrix(0.1900 0.1850 -0.1720 0.1700 350.950 597.425)"/></g></g>
<g clip-path="url(#s43)"><path d="M384.0 528.0Q415.5 533.0 447.0 528.0L447.0 591.5Q415.5 602.5 384.0 591.5Z" fill="#fff"/><g filter="url(#bl)"><use href="#box" transform="matrix(0.1900 0.1850 -0.1720 0.1700 383.700 506.800)"/><use href="#box" transform="matrix(0.1900 0.1850 -0.1720 0.1700 428.950 508.675)"/><use href="#box" transform="matrix(0.1900 0.1850 -0.1720 0.1700 407.450 529.925)"/><use href="#box" transform="matrix(0.1900 0.1850 -0.1720 0.1700 385.950 551.175)"/><use href="#box" transform="matrix(0.1900 0.1850 -0.1720 0.1700 364.450 572.425)"/><use href="#box" transform="matrix(0.1900 0.1850 -0.1720 0.1700 452.700 531.800)"/><use href="#box" transform="matrix(0.1900 0.1850 -0.1720 0.1700 431.200 553.050)"/><use href="#box" transform="matrix(0.1900 0.1850 -0.1720 0.1700 409.700 574.300)"/><use href="#box" transform="matrix(0.1900 0.1850 -0.1720 0.1700 388.200 595.550)"/><use href="#box" transform="matrix(0.1900 0.1850 -0.1720 0.1700 454.950 576.175)"/><use href="#box" transform="matrix(0.1900 0.1850 -0.1720 0.1700 433.450 597.425)"/></g></g>
<g clip-path="url(#s44)"><path d="M463.0 527.0Q495.0 521.0 527.0 527.0L527.0 593.5Q495.0 600.5 463.0 593.5Z" fill="#fff"/><g filter="url(#bl)"><use href="#box" transform="matrix(0.4080 0.2470 -0.3420 0.1920 483.600 562.700)"/><use href="#box" transform="matrix(0.4100 0.2500 -0.3400 0.2000 430.000 529.000)"/><g clip-path="url(#q321)"><use href="#box" transform="matrix(0.6875 0.1787 -0.0612 0.2044 463.008 525.973)"/></g><g clip-path="url(#q322)"><use href="#box" transform="matrix(0.6825 0.1963 -0.0612 0.2044 463.023 525.918)"/></g><g clip-path="url(#q323)"><use href="#box" transform="matrix(0.6775 0.2137 -0.0612 0.2044 463.039 525.863)"/></g><g clip-path="url(#q324)"><use href="#box" transform="matrix(0.6725 0.2313 -0.0612 0.2044 463.055 525.809)"/></g><g clip-path="url(#q325)"><use href="#box" transform="matrix(0.6875 0.1787 -0.0638 0.2131 463.023 525.918)"/></g><g clip-path="url(#q326)"><use href="#box" transform="matrix(0.6825 0.1963 -0.0638 0.2131 463.070 525.754)"/></g><g clip-path="url(#q327)"><use href="#box" transform="matrix(0.6775 0.2137 -0.0638 0.2131 463.117 525.590)"/></g><g clip-path="url(#q328)"><use href="#box" transform="matrix(0.6725 0.2313 -0.0638 0.2131 463.164 525.426)"/></g><g clip-path="url(#q329)"><use href="#box" transform="matrix(0.6875 0.1787 -0.0663 0.2219 463.039 525.863)"/></g><g clip-path="url(#q330)"><use href="#box" transform="matrix(0.6825 0.1963 -0.0663 0.2219 463.117 525.590)"/></g><g clip-path="url(#q331)"><use href="#box" transform="matrix(0.6775 0.2137 -0.0663 0.2219 463.195 525.316)"/></g><g clip-path="url(#q332)"><use href="#box" transform="matrix(0.6725 0.2313 -0.0663 0.2219 463.273 525.043)"/></g><g clip-path="url(#q333)"><use href="#box" transform="matrix(0.6875 0.1787 -0.0688 0.2306 463.055 525.809)"/></g><g clip-path="url(#q334)"><use href="#box" transform="matrix(0.6825 0.1963 -0.0688 0.2306 463.164 525.426)"/></g><g clip-path="url(#q335)"><use href="#box" transform="matrix(0.6775 0.2137 -0.0688 0.2306 463.273 525.043)"/></g><g clip-path="url(#q336)"><use href="#box" transform="matrix(0.6725 0.2313 -0.0688 0.2306 463.383 524.660)"/></g><g clip-path="url(#q337)"><use href="#box" transform="matrix(0.6875 0.1787 -0.0712 0.2394 463.070 525.754)"/></g><g clip-path="url(#q338)"><use href="#box" transform="matrix(0.6825 0.1963 -0.0712 0.2394 463.211 525.262)"/></g><g clip-path="url(#q339)"><use href="#box" transform="matrix(0.6775 0.2137 -0.0712 0.2394 463.352 524.770)"/></g><g clip-path="url(#q340)"><use href="#box" transform="matrix(0.6725 0.2313 -0.0712 0.2394 463.492 524.277)"/></g><g clip-path="url(#q341)"><use href="#box" transform="matrix(0.6875 0.1787 -0.0737 0.2481 463.086 525.699)"/></g><g clip-path="url(#q342)"><use href="#box" transform="matrix(0.6825 0.1963 -0.0737 0.2481 463.258 525.098)"/></g><g clip-path="url(#q343)"><use href="#box" transform="matrix(0.6775 0.2137 -0.0737 0.2481 463.430 524.496)"/></g><g clip-path="url(#q344)"><use href="#box" transform="matrix(0.6725 0.2313 -0.0737 0.2481 463.602 523.895)"/></g><g clip-path="url(#q345)"><use href="#box" transform="matrix(0.6875 0.1787 -0.0762 0.2569 463.102 525.645)"/></g><g clip-path="url(#q346)"><use href="#box" transform="matrix(0.6825 0.1963 -0.0762 0.2569 463.305 524.934)"/></g><g clip-path="url(#q347)"><use href="#box" transform="matrix(0.6775 0.2137 -0.0762 0.2569 463.508 524.223)"/></g><g clip-path="url(#q348)"><use href="#box" transform="matrix(0.6725 0.2313 -0.0762 0.2569 463.711 523.512)"/></g><g clip-path="url(#q349)"><use href="#box" transform="matrix(0.6875 0.1787 -0.0788 0.2656 463.117 525.590)"/></g><g clip-path="url(#q350)"><use href="#box" transform="matrix(0.6825 0.1963 -0.0788 0.2656 463.352 524.770)"/></g><g clip-path="url(#q351)"><use href="#box" transform="matrix(0.6775 0.2137 -0.0788 0.2656 463.586 523.949)"/></g><g clip-path="url(#q352)"><use href="#box" transform="matrix(0.6725 0.2313 -0.0788 0.2656 463.820 523.129)"/></g><g clip-path="url(#q353)"><use href="#box" transform="matrix(0.6875 0.1787 -0.0813 0.2744 463.133 525.535)"/></g><g clip-path="url(#q354)"><use href="#box" transform="matrix(0.6825 0.1963 -0.0813 0.2744 463.398 524.605)"/></g><g clip-path="url(#q355)"><use href="#box" transform="matrix(0.6775 0.2137 -0.0813 0.2744 463.664 523.676)"/></g><g clip-path="url(#q356)"><use href="#box" transform="matrix(0.6725 0.2313 -0.0813 0.2744 463.930 522.746)"/></g><g clip-path="url(#q357)"><use href="#box" transform="matrix(0.6875 0.1787 -0.0838 0.2831 463.148 525.480)"/></g><g clip-path="url(#q358)"><use href="#box" transform="matrix(0.6825 0.1963 -0.0838 0.2831 463.445 524.441)"/></g><g clip-path="url(#q359)"><use href="#box" transform="matrix(0.6775 0.2137 -0.0838 0.2831 463.742 523.402)"/></g><g clip-path="url(#q360)"><use href="#box" transform="matrix(0.6725 0.2313 -0.0838 0.2831 464.039 522.363)"/></g><g clip-path="url(#q361)"><use href="#box" transform="matrix(0.6875 0.1787 -0.0862 0.2919 463.164 525.426)"/></g><g clip-path="url(#q362)"><use href="#box" transform="matrix(0.6825 0.1963 -0.0862 0.2919 463.492 524.277)"/></g><g clip-path="url(#q363)"><use href="#box" transform="matrix(0.6775 0.2137 -0.0862 0.2919 463.820 523.129)"/></g><g clip-path="url(#q364)"><use href="#box" transform="matrix(0.6725 0.2313 -0.0862 0.2919 464.148 521.980)"/></g><g clip-path="url(#q365)"><use href="#box" transform="matrix(0.6875 0.1787 -0.0887 0.3006 463.180 525.371)"/></g><g clip-path="url(#q366)"><use href="#box" transform="matrix(0.6825 0.1963 -0.0887 0.3006 463.539 524.113)"/></g><g clip-path="url(#q367)"><use href="#box" transform="matrix(0.6775 0.2137 -0.0887 0.3006 463.898 522.855)"/></g><g clip-path="url(#q368)"><use href="#box" transform="matrix(0.6725 0.2313 -0.0887 0.3006 464.258 521.598)"/></g><g clip-path="url(#q369)"><use href="#box" transform="matrix(0.6875 0.1787 -0.0912 0.3094 463.195 525.316)"/></g><g clip-path="url(#q370)"><use href="#box" transform="matrix(0.6825 0.1963 -0.0912 0.3094 463.586 523.949)"/></g><g clip-path="url(#q371)"><use href="#box" transform="matrix(0.6775 0.2137 -0.0912 0.3094 463.977 522.582)"/></g><g clip-path="url(#q372)"><use href="#box" transform="matrix(0.6725 0.2313 -0.0912 0.3094 464.367 521.215)"/></g><g clip-path="url(#q373)"><use href="#box" transform="matrix(0.6875 0.1787 -0.0938 0.3181 463.211 525.262)"/></g><g clip-path="url(#q374)"><use href="#box" transform="matrix(0.6825 0.1963 -0.0938 0.3181 463.633 523.785)"/></g><g clip-path="url(#q375)"><use href="#box" transform="matrix(0.6775 0.2137 -0.0938 0.3181 464.055 522.309)"/></g><g clip-path="url(#q376)"><use href="#box" transform="matrix(0.6725 0.2313 -0.0938 0.3181 464.477 520.832)"/></g><g clip-path="url(#q377)"><use href="#box" transform="matrix(0.6875 0.1787 -0.0963 0.3269 463.227 525.207)"/></g><g clip-path="url(#q378)"><use href="#box" transform="matrix(0.6825 0.1963 -0.0963 0.3269 463.680 523.621)"/></g><g clip-path="url(#q379)"><use href="#box" transform="matrix(0.6775 0.2137 -0.0963 0.3269 464.133 522.035)"/></g><g clip-path="url(#q380)"><use href="#box" transform="matrix(0.6725 0.2313 -0.0963 0.3269 464.586 520.449)"/></g><g clip-path="url(#q381)"><use href="#box" transform="matrix(0.6875 0.1787 -0.0988 0.3356 463.242 525.152)"/></g><g clip-path="url(#q382)"><use href="#box" transform="matrix(0.6825 0.1963 -0.0988 0.3356 463.727 523.457)"/></g><g clip-path="url(#q383)"><use href="#box" transform="matrix(0.6775 0.2137 -0.0988 0.3356 464.211 521.762)"/></g><g clip-path="url(#q384)"><use href="#box" transform="matrix(0.6725 0.2313 -0.0988 0.3356 464.695 520.066)"/></g></g></g>
<g id="caps">
<rect x="463" y="293" width="30" height="2.2" fill="#e05050"/><rect x="493" y="293.5" width="34" height="2.2" fill="#7070e0"/>
<ellipse cx="255.5" cy="527" rx="32" ry="3" fill="#e6e6e6"/>
<path d="M226 527.5Q255 523 286 527" fill="none" stroke="#b4b4b4" stroke-width="1.6"/>
<path d="M230 529Q256 530.5 280 528" fill="none" stroke="#c8c8c8" stroke-width="1"/>
<ellipse cx="495" cy="527" rx="32" ry="3" fill="#e6e6e6"/>
<path d="M466 527.5Q495 523 526 527" fill="none" stroke="#b0b0b0" stroke-width="1.6"/>
<path d="M470 529Q496 530.5 520 528" fill="none" stroke="#c0c0c0" stroke-width="1"/>
<path d="M228 352.2Q255.5 354.5 287 352" fill="none" stroke="#a8a8a8" stroke-width="1.2"/>
<path d="M468 352.2Q495 354.5 526 352" fill="none" stroke="#a8a8a8" stroke-width="1.2"/>
</g>

<g id="icons">
<!-- title icon -->
<path d="M8.6 18.3H13.5L14.3 17.6H17.8L18.6 18.3H23.3V22.3H8.6Z" fill="#000"/>
<rect x="9.4" y="18.8" width="6.2" height="2.9" fill="#8c4a28"/>
<rect x="15.9" y="18.8" width="6.8" height="2.9" fill="#ec5424"/>
<rect x="14.2" y="12.2" width="3.3" height="5.6" fill="#000"/>
<rect x="14.9" y="12.4" width="1.9" height="5.2" fill="#989888"/>
<path d="M12.3 8.8L13.2 7.3H18.8L19.8 8.8V11.6L18.8 12.7H13.2L12.3 11.6Z" fill="#1c1c18"/>
<rect x="14.3" y="8.6" width="3.4" height="1.3" fill="#787870"/>
<!-- min/max/close glyphs -->
<rect x="840" y="18" width="7" height="2" fill="#000"/>
<rect x="856" y="10" width="9" height="9" fill="none" stroke="#000" stroke-width="1" transform="translate(0.5 0.5)" />
<rect x="856" y="10" width="10" height="2" fill="#000"/>
<path d="M876.5 11.5L884.5 19.5M884.5 11.5L876.5 19.5" stroke="#000" stroke-width="2"/>
<!-- open icon -->
<linearGradient id="fold" x1="0" y1="0" x2="0" y2="1"><stop offset="0" stop-color="#e4e4a4"/><stop offset="0.5" stop-color="#d6d68a"/><stop offset="1" stop-color="#c4c070"/></linearGradient>
<rect x="20.5" y="69.5" width="7.5" height="17" fill="#c8c8c8" stroke="#4a4a4a" stroke-width="1"/>
<path d="M27.5 74V67.5H34.5L37.5 70.5V74" fill="#f4f4f4" stroke="#3a3a3a" stroke-width="1"/>
<path d="M34.5 67.5V70.5H37.5" fill="#d8d8d8" stroke="#777" stroke-width="0.6"/>
<path d="M29.3 70.5H33M29.3 72.6H33" stroke="#8a8a8a" stroke-width="0.9"/>
<path d="M22 74H39.8V81.6H38.8V86.9H22Z" fill="url(#fold)" stroke="#aca030" stroke-width="1"/>
<path d="M23.2 75.3H38.3" stroke="#eeeebc" stroke-width="0.8"/>
<!-- examine cube -->
<g fill="none" stroke="#000">
<path d="M151.5 67.6V84.1H168.4" stroke="#3a6050" stroke-width="0.7"/>
<path d="M143.6 88.1L151.5 84.1" stroke="#3a6050" stroke-width="0.7"/>
<rect x="143.9" y="71.9" width="16.5" height="16" stroke-width="1.3"/>
<path d="M143.9 71.9L151.5 67.8H168.2V84.1L160.4 88M160.4 71.9L168.2 67.8" stroke-width="1.3"/>
</g>
<!-- walk -->
<g stroke="#000" fill="none" stroke-linecap="round" stroke-linejoin="round">
<circle cx="302.8" cy="68.7" r="1.7" fill="#000" stroke="none"/>
<path d="M302.8 72.3L302.7 79.8" stroke-width="3.8"/>
<path d="M300.9 72.6L298.2 76.9" stroke-width="1.5"/>
<path d="M304.8 72.6L306.6 78.2" stroke-width="1.5"/>
<path d="M302 80L299.2 84.2L295 87.3" stroke-width="2.1"/>
<path d="M303.7 80.2L305.3 84.6L309.5 87.5" stroke-width="2"/>
</g>
<!-- fly -->
<path fill="#000" d="M399.9 72.3L400.3 71.7L403 70.8L403.9 68.1L406.1 67.2L411.2 67L415.2 67.4L411.9 68.5L409.4 70.3L407.6 72.8L407 74.7L408.7 77.6L410.8 79.2L409.8 80.5L407.6 79.4L405.4 77.9L402.8 79.4L400.3 81.2L399.4 83.4L398.5 88.1L397.4 84.8L397.2 78.3L398.5 76.1L400.3 74.6L399.9 73.2Z"/>
<!-- camera -->
<rect x="629" y="68.9" width="4" height="3" fill="#000"/>
<rect x="627.1" y="71.2" width="23.8" height="16.7" rx="1.5" fill="#000"/>
<circle cx="638.3" cy="79.5" r="4.3" fill="none" stroke="#96dcbc" stroke-width="1.3"/>
<rect x="644.6" y="73.8" width="3.4" height="2.1" fill="#96dcbc"/>
</g>

<defs>
<linearGradient id="cyl1" x1="0" y1="0" x2="1" y2="0">
 <stop offset="0" stop-color="#78b8b8"/><stop offset="0.18" stop-color="#98e8e8"/><stop offset="0.3" stop-color="#a4fafa"/><stop offset="0.55" stop-color="#a6fcfc"/><stop offset="0.75" stop-color="#80c8c8"/><stop offset="0.9" stop-color="#5a8c8c"/><stop offset="1" stop-color="#304c4c"/>
</linearGradient>
<linearGradient id="cyl3" x1="0" y1="0" x2="1" y2="0">
 <stop offset="0" stop-color="#2a5050"/><stop offset="0.1" stop-color="#78c4c4"/><stop offset="0.35" stop-color="#88dcdc"/><stop offset="0.47" stop-color="#a8ffff"/><stop offset="0.6" stop-color="#90e4e4"/><stop offset="0.8" stop-color="#78c0c0"/><stop offset="0.92" stop-color="#4a7c7c"/><stop offset="1" stop-color="#1c3030"/>
</linearGradient>
</defs>
<path d="M223 607.4L223 674Q255.5 684.4 288 674L288 607.4Z" fill="url(#cyl1)"/>
<ellipse cx="255.5" cy="607.4" rx="32.5" ry="6.2" fill="#081010"/>
<polygon points="304,608 310,612 310,677.5 304,671.8" fill="#4a7474"/>
<polygon points="310,612 333,614 356,612 356,677.5 333,679 310,677.5" fill="#98f4f4"/>
<polygon points="356,612 368,607 368,671.5 356,677.5" fill="#4a7474"/>
<path d="M384 608Q415.5 619.2 447 608L447 671.8Q415.5 685.4 384 671.8Z" fill="url(#cyl3)"/>
<polygon points="463,606.5 473,602 495,601.2 517,602 527,608 520,612 495,614 473,612" fill="#081010"/>
<polygon points="463,606.5 473,612 473,677 463,670" fill="#4a7474"/>
<polygon points="473,612 495,614 520,612 520,677 495,679 473,677" fill="#98f4f4"/>
<polygon points="520,612 527,608 527,671 520,677" fill="#4a7474"/>

<rect x="9.5" y="727.5" width="720" height="59" fill="none" stroke="#ffff00" stroke-width="1"/>
<g font-family="Liberation Mono" font-weight="bold" font-size="16" fill="#ffff00" transform="translate(14 0) scale(0.9402 1)">
<text x="0" y="746.8">Camera: pos<tspan fill="#fff"> (0.00, 0.00, 27.97)</tspan>, dir<tspan fill="#fff"> (0.00, 0.00, -1.00)</tspan>, up<tspan fill="#fff"> (0.00, 1.00, 0.00)</tspan></text>
<text x="0" y="762.8" xml:space="preserve">Rendered Shapes:<tspan fill="#fff"> 30 / 30</tspan></text>
<text x="0" y="778.6" xml:space="preserve">World time:<tspan fill="#fff"> load time + 609</tspan></text>
</g>

<g font-family="Liberation Serif" font-size="38" fill="#cfcfcf" id="ttl"><text x="106.8" y="190.6" textLength="130.2" lengthAdjust="spacingAndGlyphs">Texture</text><text x="249.6" y="190.6" textLength="72.4" lengthAdjust="spacingAndGlyphs">Map</text><text x="332.9" y="190.6" textLength="216.7" lengthAdjust="spacingAndGlyphs">Comparisons</text><text x="559.7" y="190.6" textLength="48.3" lengthAdjust="spacingAndGlyphs">for</text><text x="618.0" y="190.6" textLength="173.3" lengthAdjust="spacingAndGlyphs">Cylinders!</text></g>
<g font-family="Liberation Serif" font-weight="bold" font-size="26.5" fill="#f0f0f0">
<text x="196.21" y="259.8" textLength="118.59" lengthAdjust="spacingAndGlyphs">Cylinder</text>
<text x="313.24" y="259.8" textLength="45.94" lengthAdjust="spacingAndGlyphs">IFS</text>
<text x="383.98" y="259.8" textLength="59.04" lengthAdjust="spacingAndGlyphs">ITS</text>
<text x="428.79" y="259.8" textLength="132.31" lengthAdjust="spacingAndGlyphs">Extrusion</text>
</g>
<g font-family="Liberation Serif" font-size="27" id="labels"><text x="543.48" y="314.7" fill="#eeeeee" textLength="92.01" lengthAdjust="spacingAndGlyphs">Default</text><text x="643.90" y="314.7" fill="#eeeeee" textLength="98.01" lengthAdjust="spacingAndGlyphs">Texture</text><text x="543.08" y="394.6" fill="#eeeeee" textLength="83.82" lengthAdjust="spacingAndGlyphs">Rotate</text><text x="636.09" y="394.6" fill="#eeeeee" textLength="98.62" lengthAdjust="spacingAndGlyphs">Texture</text><text x="543.49" y="474.2" fill="#eeeeee" textLength="92.85" lengthAdjust="spacingAndGlyphs">Rotate,</text><text x="643.29" y="474.2" fill="#eeeeee" textLength="120.21" lengthAdjust="spacingAndGlyphs">Translate</text><text x="772.09" y="474.2" fill="#eeeeee" textLength="98.83" lengthAdjust="spacingAndGlyphs">Texture</text><text x="543.49" y="554.0" fill="#eeeeee" textLength="92.85" lengthAdjust="spacingAndGlyphs">Rotate,</text><text x="643.29" y="554.0" fill="#eeeeee" textLength="129.03" lengthAdjust="spacingAndGlyphs">Translate,</text><text x="777.85" y="554.0" fill="#eeeeee" textLength="67.87" lengthAdjust="spacingAndGlyphs">Scale</text><text x="542.42" y="633.5" fill="#98ece6" textLength="38.34" lengthAdjust="spacingAndGlyphs">No</text><text x="588.87" y="633.5" fill="#98ece6" textLength="99.85" lengthAdjust="spacingAndGlyphs">Texture</text></g>
</svg>

</body></html>
